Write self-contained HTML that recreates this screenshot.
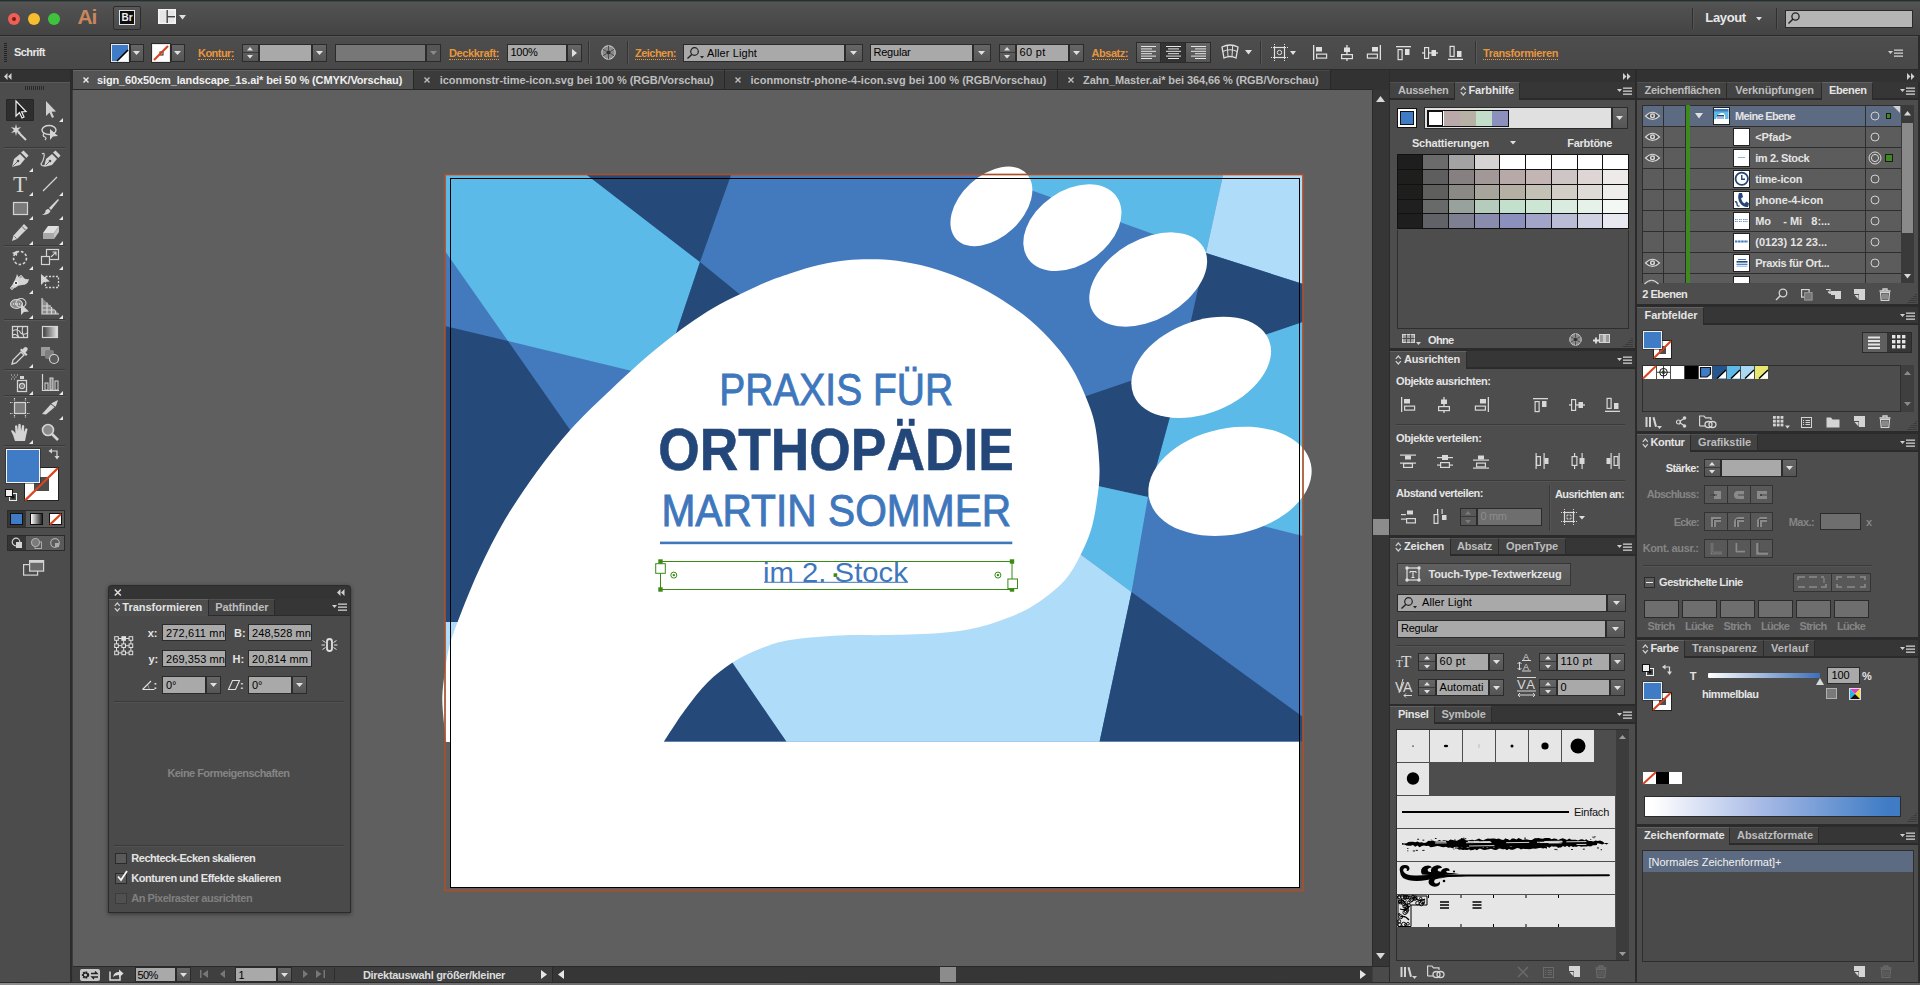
<!DOCTYPE html>
<html lang="de"><head><meta charset="utf-8"><title>Adobe Illustrator</title><style>
html,body{margin:0;padding:0;background:#5f5f5f;}
body{width:1920px;height:985px;overflow:hidden;position:relative;font-family:"Liberation Sans",sans-serif;font-weight:bold;font-size:11px;}
#app{position:absolute;left:0;top:0;width:1920px;height:985px;overflow:hidden;background:#5f5f5f;}
#app div,#app span,#app svg{position:absolute;display:block;box-sizing:border-box;}
#app span{white-space:pre;}
#app svg{overflow:visible;}
</style></head><body><div id="app">
<div style="left:73px;top:90px;width:1300px;height:876px;background:#5f5f5f;"></div>
<svg style="left:73px;top:90px;font-family:'Liberation Sans',sans-serif;" width="1300" height="876" viewBox="73 90 1300 876"><defs><clipPath id="bleed"><rect x="445" y="175" width="858" height="566.5"/></clipPath></defs><rect x="450" y="178" width="850" height="710" fill="#fff"/><g clip-path="url(#bleed)"><rect x="445" y="175" width="858" height="567" fill="#437abe"/><polygon points="445,175 587,175 700,262 661,378 508,341 445,251" fill="#5bbae7"/><polygon points="587,175 731,175 700,262" fill="#254a79"/><polygon points="700,262 780,327 661,378" fill="#254a79"/><polygon points="445,326 508,341 640,530 445,640" fill="#254a79"/><polygon points="989,175 1223,175 1206,253" fill="#5bbae7"/><polygon points="1223,175 1303,175 1303,284 1206,253" fill="#afdcf8"/><polygon points="1206,253 1303,284 1303,322 1181.5,363.5" fill="#254a79"/><polygon points="1303,322 1181.5,363.5 1169.6,418 1148,497 1303,536" fill="#5bbae7"/><polygon points="1181.5,363.5 1000,425.5 1000,464 1098,486 1148,497 1169.6,418" fill="#254a79"/><polygon points="1000,464 1098,486 1148,497 1131.5,592 1080,554 1000,495" fill="#5bbae7"/><polygon points="1000,495 1080,554 1131.5,592 1099.5,742 786.6,742 731.5,663 700,560" fill="#afdcf8"/><polygon points="732,662 786.6,742 640,742 640,662" fill="#254a79"/><polygon points="1131.5,592 1303,717 1303,742 1099.5,742" fill="#254a79"/><polygon points="445,622 475,622 475,742 445,742" fill="#afdcf8"/></g><path d="M664,741.5 C667.5,736.25 677.75,719.83 685,710 C692.25,700.17 699.58,690.42 707.5,682.5 C715.42,674.58 723.75,668.12 732.5,662.5 C741.25,656.88 750.42,652.55 760,648.8 C769.58,645.05 776.67,642.22 790,640 C803.33,637.78 823.33,636.33 840,635.5 C856.67,634.67 873.33,635.42 890,635 C906.67,634.58 925.42,634.25 940,633 C954.58,631.75 965,630.5 977.5,627.5 C990,624.5 1004.58,619.37 1015,615 C1025.42,610.63 1031.67,607.13 1040,601.3 C1048.33,595.47 1058.33,587.55 1065,580 C1071.67,572.45 1075.67,564.33 1080,556 C1084.33,547.67 1088.17,539.33 1091,530 C1093.83,520.67 1095.58,510.33 1097,500 C1098.42,489.67 1099.83,480.5 1099.5,468 C1099.17,455.5 1097.42,437.17 1095,425 C1092.58,412.83 1088.83,404.45 1085,395 C1081.17,385.55 1077,376.63 1072,368.3 C1067,359.97 1062,353.05 1055,345 C1048,336.95 1039.67,328.05 1030,320 C1020.33,311.95 1008.17,303.5 997,296.7 C985.83,289.9 974.17,284.07 963,279.2 C951.83,274.33 941,270.57 930,267.5 C919,264.43 906.67,262.18 897,260.8 C887.33,259.42 880.33,259.3 872,259.2 C863.67,259.1 855.67,259.27 847,260.2 C838.33,261.13 829.5,262.58 820,264.8 C810.5,267.02 800.5,269.93 790,273.5 C779.5,277.07 770.83,279.83 757,286.2 C743.17,292.57 723.67,301.35 707,311.7 C690.33,322.05 673.67,334.7 657,348.3 C640.33,361.9 621.5,379.63 607,393.3 C592.5,406.97 581.6,417.35 570,430.3 C558.4,443.25 548.23,456.12 537.4,471 C526.57,485.88 514.73,503.1 505,519.6 C495.27,536.1 486.9,552.93 479,570 C471.1,587.07 462.6,609 457.6,622 C452.6,635 451.17,639.33 449,648 C446.83,656.67 445.72,665.83 444.6,674 C443.48,682.17 442.47,689.43 442.3,697 C442.13,704.57 442.95,711.9 443.6,719.4 C444.25,726.9 445.77,738.23 446.2,742 L450,742 L450,760 L664,760 Z" fill="#fff"/><ellipse cx="991.4" cy="206.4" rx="48" ry="31" transform="rotate(-43 991.4 206.4)" fill="#fff"/><ellipse cx="1072.4" cy="227.7" rx="54" ry="37" transform="rotate(-35 1072.4 227.7)" fill="#fff"/><ellipse cx="1148.2" cy="279.5" rx="64" ry="40" transform="rotate(-30 1148.2 279.5)" fill="#fff"/><ellipse cx="1201.2" cy="367.3" rx="73" ry="46" transform="rotate(-22 1201.2 367.3)" fill="#fff"/><ellipse cx="1230" cy="481.3" rx="82.7" ry="53" transform="rotate(-12 1230 481.3)" fill="#fff"/><rect x="450.5" y="178.5" width="849" height="709" fill="none" stroke="#000" stroke-width="1"/><rect x="445" y="174.5" width="858" height="716" fill="none" stroke="#a8502c" stroke-width="1.7"/><text x="719.2" y="405.3" font-size="44.6" font-weight="normal" fill="#3f77bc" stroke="#3f77bc" stroke-width="0.9" textLength="234" lengthAdjust="spacingAndGlyphs">PRAXIS FÜR</text><text x="658.3" y="469.8" font-size="59" font-weight="bold" fill="#24477a" stroke="#24477a" stroke-width="0.6" textLength="355.5" lengthAdjust="spacingAndGlyphs">ORTHOPÄDIE</text><text x="661.4" y="525.6" font-size="44.2" font-weight="normal" fill="#3f77bc" stroke="#3f77bc" stroke-width="0.9" textLength="349.8" lengthAdjust="spacingAndGlyphs">MARTIN SOMMER</text><rect x="660" y="541.6" width="352.3" height="2.6" fill="#3f77bc"/><text x="763.1" y="582.2" font-size="27.2" font-weight="normal" fill="#3f77bc" textLength="144.7" lengthAdjust="spacingAndGlyphs">im 2. Stock</text><rect x="764" y="581.8" width="144" height="1" fill="#3f77bc"/><rect x="660.5" y="561.5" width="351.5" height="28" fill="none" stroke="#3a8a14" stroke-width="1"/><rect x="658.3" y="559.3" width="4.4" height="4.4" fill="#3a8a14"/><rect x="658.3" y="587.3" width="4.4" height="4.4" fill="#3a8a14"/><rect x="1009.8" y="559.3" width="4.4" height="4.4" fill="#3a8a14"/><rect x="1009.8" y="587.3" width="4.4" height="4.4" fill="#3a8a14"/><rect x="655.7" y="563.7" width="9.6" height="9.6" fill="#fff" stroke="#3a8a14"/><rect x="1007.9" y="579" width="9.6" height="9.6" fill="#fff" stroke="#3a8a14"/><circle cx="673.8" cy="575.1" r="3" fill="#fff" stroke="#3a8a14" stroke-width="1"/><circle cx="673.8" cy="575.1" r="1.2" fill="#3a8a14"/><circle cx="997.9" cy="575.1" r="3" fill="#fff" stroke="#3a8a14" stroke-width="1"/><circle cx="997.9" cy="575.1" r="1.2" fill="#3a8a14"/><rect x="833.6" y="573.3" width="3.6" height="3.6" fill="#3a8a14"/></svg>
<div style="left:0px;top:0px;width:1920px;height:36px;background:#434343;background:linear-gradient(#575757 0px,#505050 8px,#444444 34px);"></div>
<div style="left:0px;top:0px;width:1920px;height:1px;background:#23302f;"></div>
<div style="left:0px;top:1px;width:1920px;height:1px;background:#424646;"></div>
<div style="left:0px;top:35px;width:1920px;height:1px;background:#2a2a2a;"></div>
<svg style="left:7.2px;top:11.7px;" width="14" height="14"><circle cx="7" cy="7" r="6" fill="#ee5f57"/><circle cx="7" cy="7" r="2" fill="#7a1d14"/></svg>
<svg style="left:27px;top:11.7px;" width="14" height="14"><circle cx="7" cy="7" r="6" fill="#f6be2f"/></svg>
<svg style="left:47px;top:11.7px;" width="14" height="14"><circle cx="7" cy="7" r="6" fill="#3fc33e"/></svg>
<span style="left:77.5px;top:3.5px;height:26px;line-height:26px;font-size:21px;color:#c8875d;letter-spacing:-1.25px;">Ai</span>
<div style="left:113px;top:6px;width:28px;height:24px;background:#505050;border:1px solid #2c2c2c;border-radius:2px;background:linear-gradient(#585858,#4a4a4a);"></div>
<div style="left:119px;top:10px;width:16px;height:15px;background:#0e0e0e;border:1px solid #e6e6e6;"></div>
<span style="left:121.44px;top:10.5px;height:14px;line-height:14px;font-size:10px;color:#f0f0f0;">Br</span>
<svg style="left:158px;top:9px;" width="18" height="15"><rect x="0.75" y="0.75" width="16.5" height="13.5" fill="#e6e6e6" stroke="#f4f4f4" stroke-width="1.5"/><rect x="8.5" y="1" width="1.4" height="13" fill="#444"/><rect x="9" y="7" width="8" height="1.4" fill="#444"/></svg>
<svg style="left:178.5px;top:14.75px;" width="7" height="4.5"><polygon points="0,0 7,0 3.5,4.5" fill="#e0e0e0"/></svg>
<div style="left:1691.5px;top:8px;width:1px;height:21px;background:#2f2f2f;"></div>
<div style="left:1692.5px;top:8px;width:1px;height:21px;background:#555;"></div>
<span style="left:1705.3px;top:8.5px;height:18px;line-height:18px;font-size:13px;color:#e8e8e8;letter-spacing:-0.35px;">Layout</span>
<svg style="left:1755.5px;top:16.75px;" width="6" height="3.5"><polygon points="0,0 6,0 3,3.5" fill="#e0e0e0"/></svg>
<div style="left:1776px;top:8px;width:1px;height:21px;background:#2f2f2f;"></div>
<div style="left:1777px;top:8px;width:1px;height:21px;background:#555;"></div>
<div style="left:1784.5px;top:9.5px;width:128px;height:18px;background:#b4b4b4;border:1px solid #2a2a2a;"></div>
<svg style="left:1787px;top:11px;" width="14" height="14"><circle cx="8.5" cy="5.5" r="3.6" fill="none" stroke="#222" stroke-width="1.3"/><line x1="6" y1="8" x2="1.5" y2="12.5" stroke="#222" stroke-width="1.5"/></svg>
<div style="left:0px;top:36px;width:1920px;height:33px;background:#4a4a4a;background:linear-gradient(#4d4d4d,#484848);"></div>
<div style="left:0px;top:36px;width:1920px;height:1px;background:#565656;"></div>
<div style="left:0px;top:69px;width:1920px;height:1px;background:#2a2a2a;"></div>
<div style="left:4px;top:43px;width:3px;height:20px;background:transparent;background:repeating-linear-gradient(#222 0px,#222 1px,transparent 1px,transparent 2px);"></div>
<span style="left:14px;top:45px;height:14px;line-height:14px;font-size:11px;color:#e6e6e6;letter-spacing:-0.55px;">Schrift</span>
<div style="left:110.5px;top:43.5px;width:18px;height:18px;background:#3f7cc5;border:1px solid #e8e8e8;outline:1px solid #2b2b2b;"></div>
<svg style="left:111.5px;top:44.5px;" width="16" height="16"><polygon points="16,5 16,16 5,16" fill="#fff"/><line x1="5" y1="16" x2="16" y2="5" stroke="#000" stroke-width="1.6"/></svg>
<div style="left:129.5px;top:43.5px;width:14px;height:18px;background:#5c5c5c;border:1px solid #2b2b2b;background:linear-gradient(#666,#555);"></div>
<svg style="left:133px;top:51px;" width="7" height="4"><polygon points="0,0 7,0 3.5,4" fill="#e0e0e0"/></svg>
<div style="left:151.5px;top:43.5px;width:18px;height:18px;background:#fff;border:1px solid #e8e8e8;outline:1px solid #2b2b2b;"></div>
<svg style="left:152.5px;top:44.5px;" width="16" height="16"><rect x="7" y="7" width="3" height="3" fill="none" stroke="#222" stroke-width="1"/><line x1="1" y1="15" x2="15" y2="1" stroke="#d9431e" stroke-width="2.2"/></svg>
<div style="left:170.5px;top:43.5px;width:14px;height:18px;background:#5c5c5c;border:1px solid #2b2b2b;background:linear-gradient(#666,#555);"></div>
<svg style="left:174px;top:51px;" width="7" height="4"><polygon points="0,0 7,0 3.5,4" fill="#e0e0e0"/></svg>
<span style="left:198px;top:45.5px;height:14px;line-height:14px;font-size:11px;color:#e8963c;letter-spacing:-0.53px;">Kontur:</span>
<div style="left:198px;top:59px;width:36px;height:1px;background:transparent;border-top:1px dotted #e8963c;"></div>
<div style="left:241.5px;top:43.5px;width:17px;height:18px;background:#5c5c5c;border:1px solid #2b2b2b;background:linear-gradient(#666,#555);"></div>
<div style="left:242.5px;top:52px;width:15px;height:1px;background:#3a3a3a;"></div>
<svg style="left:247px;top:47.11px;" width="6" height="3.5"><polygon points="0,3.5 6,3.5 3,0" fill="#e0e0e0"/></svg>
<svg style="left:247px;top:55.39px;" width="6" height="3.5"><polygon points="0,0 6,0 3,3.5" fill="#e0e0e0"/></svg>
<div style="left:258.5px;top:43.5px;width:53px;height:18px;background:#a9a9a9;border:1px solid #2b2b2b;"></div>
<div style="left:311.5px;top:43.5px;width:15px;height:18px;background:#5c5c5c;border:1px solid #2b2b2b;background:linear-gradient(#666,#555);"></div>
<svg style="left:315.5px;top:51px;" width="7" height="4"><polygon points="0,0 7,0 3.5,4" fill="#e0e0e0"/></svg>
<div style="left:334.5px;top:43.5px;width:91px;height:18px;background:#777777;border:1px solid #2b2b2b;"></div>
<div style="left:425.5px;top:43.5px;width:15px;height:18px;background:#565656;border:1px solid #2b2b2b;"></div>
<svg style="left:429.5px;top:51px;" width="7" height="4"><polygon points="0,0 7,0 3.5,4" fill="#8a8a8a"/></svg>
<span style="left:449px;top:45.5px;height:14px;line-height:14px;font-size:11px;color:#e8963c;letter-spacing:-0.38px;">Deckkraft:</span>
<div style="left:449px;top:59px;width:50px;height:1px;background:transparent;border-top:1px dotted #e8963c;"></div>
<div style="left:506.5px;top:43.5px;width:60px;height:18px;background:#a9a9a9;border:1px solid #2b2b2b;"></div>
<span style="left:510.5px;top:45.2px;height:14px;line-height:14px;font-size:11px;color:#000;font-weight:normal;letter-spacing:-0.28px;">100%</span>
<div style="left:566.5px;top:43.5px;width:15px;height:18px;background:#5c5c5c;border:1px solid #2b2b2b;background:linear-gradient(#666,#555);"></div>
<svg style="left:572px;top:48.5px;" width="5" height="8"><polygon points="0,0 5,4 0,8" fill="#e0e0e0"/></svg>
<div style="left:588px;top:41px;width:1px;height:23px;background:#333;"></div>
<div style="left:589px;top:41px;width:1px;height:23px;background:#585858;"></div>
<svg style="left:600.5px;top:44.5px;" width="15" height="15"><circle cx="7.5" cy="7.5" r="6.8" fill="#8a8a8a" stroke="#d8d8d8" stroke-width="1"/><circle cx="7.5" cy="7.5" r="2" fill="#333"/><path d="M7.5,0.7V5.5M7.5,9.5V14.3M1.6,4.1L5.7,6.5M9.3,8.5L13.4,10.9M1.6,10.9L5.7,8.5M9.3,6.5L13.4,4.1" stroke="#444" stroke-width="0.9"/></svg>
<div style="left:626.5px;top:41px;width:1px;height:23px;background:#333;"></div>
<div style="left:627.5px;top:41px;width:1px;height:23px;background:#585858;"></div>
<span style="left:635px;top:45.5px;height:14px;line-height:14px;font-size:11px;color:#e8963c;letter-spacing:-0.53px;">Zeichen:</span>
<div style="left:635px;top:59px;width:41px;height:1px;background:transparent;border-top:1px dotted #e8963c;"></div>
<div style="left:682.5px;top:43.5px;width:162px;height:18px;background:#a9a9a9;border:1px solid #2b2b2b;"></div>
<svg style="left:685.5px;top:46px;" width="20" height="14"><circle cx="8.5" cy="5.5" r="3.8" fill="none" stroke="#222" stroke-width="1.2"/><line x1="6" y1="8.2" x2="1.5" y2="12.5" stroke="#222" stroke-width="1.4"/><polygon points="14,10 18,10 16,12.5" fill="#222"/></svg>
<span style="left:707px;top:45.5px;height:14px;line-height:14px;font-size:11px;color:#000;font-weight:normal;letter-spacing:0.1px;">Aller Light</span>
<div style="left:844.5px;top:43.5px;width:18px;height:18px;background:#5c5c5c;border:1px solid #2b2b2b;background:linear-gradient(#666,#555);"></div>
<svg style="left:850px;top:51px;" width="7" height="4"><polygon points="0,0 7,0 3.5,4" fill="#e0e0e0"/></svg>
<div style="left:869.5px;top:43.5px;width:103px;height:18px;background:#a9a9a9;border:1px solid #2b2b2b;"></div>
<span style="left:873.5px;top:45.2px;height:14px;line-height:14px;font-size:11px;color:#000;font-weight:normal;letter-spacing:-0.22px;">Regular</span>
<div style="left:972.5px;top:43.5px;width:18px;height:18px;background:#5c5c5c;border:1px solid #2b2b2b;background:linear-gradient(#666,#555);"></div>
<svg style="left:978px;top:51px;" width="7" height="4"><polygon points="0,0 7,0 3.5,4" fill="#e0e0e0"/></svg>
<div style="left:998.5px;top:43.5px;width:17px;height:18px;background:#5c5c5c;border:1px solid #2b2b2b;background:linear-gradient(#666,#555);"></div>
<div style="left:999.5px;top:52px;width:15px;height:1px;background:#3a3a3a;"></div>
<svg style="left:1004px;top:47.11px;" width="6" height="3.5"><polygon points="0,3.5 6,3.5 3,0" fill="#e0e0e0"/></svg>
<svg style="left:1004px;top:55.39px;" width="6" height="3.5"><polygon points="0,0 6,0 3,3.5" fill="#e0e0e0"/></svg>
<div style="left:1015.5px;top:43.5px;width:53px;height:18px;background:#a9a9a9;border:1px solid #2b2b2b;"></div>
<span style="left:1019.5px;top:45.2px;height:14px;line-height:14px;font-size:11px;color:#000;font-weight:normal;letter-spacing:0.31px;">60 pt</span>
<div style="left:1068.5px;top:43.5px;width:15px;height:18px;background:#5c5c5c;border:1px solid #2b2b2b;background:linear-gradient(#666,#555);"></div>
<svg style="left:1072.5px;top:51px;" width="7" height="4"><polygon points="0,0 7,0 3.5,4" fill="#e0e0e0"/></svg>
<span style="left:1091.5px;top:45.5px;height:14px;line-height:14px;font-size:11px;color:#e8963c;letter-spacing:-0.46px;">Absatz:</span>
<div style="left:1091.5px;top:59px;width:36.5px;height:1px;background:transparent;border-top:1px dotted #e8963c;"></div>
<div style="left:1135.5px;top:41.5px;width:75px;height:21px;background:#5a5a5a;border:1px solid #2b2b2b;background:linear-gradient(#646464,#545454);"></div>
<div style="left:1160.5px;top:42.5px;width:25px;height:19px;background:#333;"></div>
<div style="left:1160px;top:42.5px;width:1px;height:19px;background:#2b2b2b;"></div>
<div style="left:1185px;top:42.5px;width:1px;height:19px;background:#2b2b2b;"></div>
<svg style="left:1140.5px;top:45.5px;" width="15" height="14"><rect x="0" y="0" width="15" height="1" fill="#e6e6e6"/><rect x="0" y="2.4" width="11" height="1" fill="#e6e6e6"/><rect x="0" y="4.8" width="15" height="1" fill="#e6e6e6"/><rect x="0" y="7.2" width="11" height="1" fill="#e6e6e6"/><rect x="0" y="9.6" width="15" height="1" fill="#e6e6e6"/><rect x="0" y="12" width="11" height="1" fill="#e6e6e6"/></svg>
<svg style="left:1165.5px;top:45.5px;" width="15" height="14"><rect x="0" y="0" width="15" height="1" fill="#e6e6e6"/><rect x="2" y="2.4" width="11" height="1" fill="#e6e6e6"/><rect x="0" y="4.8" width="15" height="1" fill="#e6e6e6"/><rect x="2" y="7.2" width="11" height="1" fill="#e6e6e6"/><rect x="0" y="9.6" width="15" height="1" fill="#e6e6e6"/><rect x="2" y="12" width="11" height="1" fill="#e6e6e6"/></svg>
<svg style="left:1190.5px;top:45.5px;" width="15" height="14"><rect x="0" y="0" width="15" height="1" fill="#e6e6e6"/><rect x="4" y="2.4" width="11" height="1" fill="#e6e6e6"/><rect x="0" y="4.8" width="15" height="1" fill="#e6e6e6"/><rect x="4" y="7.2" width="11" height="1" fill="#e6e6e6"/><rect x="0" y="9.6" width="15" height="1" fill="#e6e6e6"/><rect x="4" y="12" width="11" height="1" fill="#e6e6e6"/></svg>
<svg style="left:1221px;top:44px;" width="18" height="16"><path d="M1,3 Q9,-1 17,3 L15,14 Q9,11 3,14 Z" fill="none" stroke="#e0e0e0" stroke-width="1.3"/><path d="M6.3,1.6 L7,12.5 M11.7,1.6 L11,12.5 M1.8,7.5 Q9,4 16.2,7.5" fill="none" stroke="#e0e0e0" stroke-width="1"/></svg>
<svg style="left:1245px;top:50.25px;" width="7" height="4.5"><polygon points="0,0 7,0 3.5,4.5" fill="#e0e0e0"/></svg>
<div style="left:1260px;top:41px;width:1px;height:23px;background:#333;"></div>
<div style="left:1261px;top:41px;width:1px;height:23px;background:#585858;"></div>
<svg style="left:1271px;top:44px;" width="18" height="17"><rect x="3.5" y="3.5" width="10" height="10" fill="none" stroke="#e0e0e0" stroke-width="1.2"/><path d="M0,3.5H3M14,3.5H17M0,13.5H3M14,13.5H17M3.5,0V3M13.5,0V3M3.5,14V17M13.5,14V17" stroke="#e0e0e0" stroke-width="1" stroke-dasharray="1 1"/><circle cx="8.5" cy="8.5" r="2.2" fill="none" stroke="#e0e0e0" stroke-width="1"/></svg>
<svg style="left:1289.5px;top:51px;" width="6" height="4"><polygon points="0,0 6,0 3,4" fill="#e0e0e0"/></svg>
<svg style="left:1312.2px;top:44.5px;" width="16" height="16"><rect x="1" y="0" width="1.3" height="15" fill="#e0e0e0"/><rect x="4" y="2" width="6" height="4.5" fill="#e0e0e0"/><g fill="none" stroke="#e0e0e0" stroke-width="1.2"><rect x="4.6" y="9.1" width="10" height="4"/></g></svg>
<svg style="left:1338.5px;top:44.5px;" width="16" height="16"><rect x="7.3" y="0" width="1.3" height="16" fill="#e0e0e0"/><rect x="5" y="2.5" width="6" height="4.5" fill="#e0e0e0"/><g fill="none" stroke="#e0e0e0" stroke-width="1.2"><rect x="2.6" y="9.6" width="10.8" height="4" fill="#4d4d4d"/></g></svg>
<svg style="left:1365.5px;top:44.5px;" width="16" height="16"><rect x="13.7" y="0" width="1.3" height="15" fill="#e0e0e0"/><rect x="6" y="2" width="6" height="4.5" fill="#e0e0e0"/><g fill="none" stroke="#e0e0e0" stroke-width="1.2"><rect x="1.4" y="9.1" width="10" height="4"/></g></svg>
<svg style="left:1396px;top:44.5px;" width="16" height="16"><rect x="0" y="1" width="15" height="1.3" fill="#e0e0e0"/><rect x="9" y="4" width="4.5" height="6" fill="#e0e0e0"/><g fill="none" stroke="#e0e0e0" stroke-width="1.2"><rect x="2.1" y="4.6" width="4" height="10"/></g></svg>
<svg style="left:1422px;top:44.5px;" width="16" height="16"><rect x="0" y="7.3" width="16" height="1.3" fill="#e0e0e0"/><rect x="9.5" y="5" width="4.5" height="6" fill="#e0e0e0"/><g fill="none" stroke="#e0e0e0" stroke-width="1.2"><rect x="2.6" y="2.6" width="4" height="10.8" fill="#4d4d4d"/></g></svg>
<svg style="left:1448px;top:44.5px;" width="16" height="16"><rect x="0" y="13.7" width="15" height="1.3" fill="#e0e0e0"/><rect x="9" y="6" width="4.5" height="6" fill="#e0e0e0"/><g fill="none" stroke="#e0e0e0" stroke-width="1.2"><rect x="2.1" y="1.4" width="4" height="10"/></g></svg>
<div style="left:1474.5px;top:41px;width:1px;height:23px;background:#333;"></div>
<div style="left:1475.5px;top:41px;width:1px;height:23px;background:#585858;"></div>
<span style="left:1483px;top:45.5px;height:14px;line-height:14px;font-size:11px;color:#e8963c;letter-spacing:-0.36px;">Transformieren</span>
<div style="left:1483px;top:59px;width:75px;height:1px;background:transparent;border-top:1px dotted #e8963c;"></div>
<svg style="left:1888px;top:48.5px;" width="15" height="9"><polygon points="0,2 5,2 2.5,5" fill="#d0d0d0"/><rect x="6" y="0.5" width="9" height="1.3" fill="#d0d0d0"/><rect x="6" y="3.5" width="9" height="1.3" fill="#d0d0d0"/><rect x="6" y="6.5" width="9" height="1.3" fill="#d0d0d0"/></svg>
<div style="left:73px;top:70px;width:1300px;height:20px;background:#323232;"></div>
<div style="left:73px;top:89px;width:1300px;height:1px;background:#282828;"></div>
<div style="left:73px;top:70px;width:341px;height:19px;background:#535353;border-top:1px solid #656565;"></div>
<div style="left:413px;top:70px;width:1px;height:19px;background:#282828;"></div>
<svg style="left:83px;top:76.5px;" width="6" height="6"><path d="M0.5,0.5L5.5,5.5M5.5,0.5L0.5,5.5" stroke="#f0f0f0" stroke-width="1.4"/></svg>
<span style="left:97px;top:72.5px;height:14px;line-height:14px;font-size:11px;color:#f0f0f0;letter-spacing:-0.13px;">sign_60x50cm_landscape_1s.ai* bei 50 % (CMYK/Vorschau)</span>
<div style="left:414px;top:70px;width:311px;height:19px;background:#3b3b3b;border-top:1px solid #484848;"></div>
<div style="left:724px;top:70px;width:1px;height:19px;background:#282828;"></div>
<svg style="left:424px;top:76.5px;" width="6" height="6"><path d="M0.5,0.5L5.5,5.5M5.5,0.5L0.5,5.5" stroke="#bebebe" stroke-width="1.4"/></svg>
<span style="left:439.7px;top:72.5px;height:14px;line-height:14px;font-size:11px;color:#bebebe;letter-spacing:-0.02px;">iconmonstr-time-icon.svg bei 100 % (RGB/Vorschau)</span>
<div style="left:725px;top:70px;width:333px;height:19px;background:#3b3b3b;border-top:1px solid #484848;"></div>
<div style="left:1057px;top:70px;width:1px;height:19px;background:#282828;"></div>
<svg style="left:735px;top:76.5px;" width="6" height="6"><path d="M0.5,0.5L5.5,5.5M5.5,0.5L0.5,5.5" stroke="#bebebe" stroke-width="1.4"/></svg>
<span style="left:750.5px;top:72.5px;height:14px;line-height:14px;font-size:11px;color:#bebebe;letter-spacing:0.02px;">iconmonstr-phone-4-icon.svg bei 100 % (RGB/Vorschau)</span>
<div style="left:1058px;top:70px;width:273px;height:19px;background:#3b3b3b;border-top:1px solid #484848;"></div>
<div style="left:1330px;top:70px;width:1px;height:19px;background:#282828;"></div>
<svg style="left:1068px;top:76.5px;" width="6" height="6"><path d="M0.5,0.5L5.5,5.5M5.5,0.5L0.5,5.5" stroke="#bebebe" stroke-width="1.4"/></svg>
<span style="left:1083px;top:72.5px;height:14px;line-height:14px;font-size:11px;color:#bebebe;letter-spacing:-0.09px;">Zahn_Master.ai* bei 364,66 % (RGB/Vorschau)</span>
<div style="left:1372px;top:90px;width:17px;height:876px;background:#363636;border-left:1px solid #2a2a2a;"></div>
<div style="left:1372px;top:70px;width:17px;height:20px;background:#323232;"></div>
<svg style="left:1376px;top:96px;" width="9" height="6"><polygon points="0,6 9,6 4.5,0" fill="#d8d8d8"/></svg>
<svg style="left:1376px;top:953px;" width="9" height="6"><polygon points="0,0 9,0 4.5,6" fill="#d8d8d8"/></svg>
<div style="left:1373px;top:519px;width:16px;height:15.5px;background:#8c8c8c;"></div>
<div style="left:73px;top:966px;width:1316px;height:16px;background:#3f3f3f;border-top:1px solid #2a2a2a;"></div>
<div style="left:1918px;top:36px;width:2px;height:949px;background:#2b2b2b;"></div>
<svg style="left:79.5px;top:968.5px;" width="20" height="12"><rect x="0" y="0" width="20" height="12" rx="2" fill="#c6c6c6"/><circle cx="5.500" cy="6" r="2.600" fill="none" stroke="#222" stroke-width="2.200" stroke-dasharray="1.500 0.900"/><circle cx="5.500" cy="6" r="2.200" fill="none" stroke="#222" stroke-width="1.200"/><path d="M11,4.500h6l-2,-2M18,8h-6l2,2" stroke="#222" stroke-width="1.300" fill="none"/></svg>
<svg style="left:109px;top:967.5px;" width="15" height="13"><path d="M1,3.5V12H11V8" fill="none" stroke="#ddd" stroke-width="1.5"/><path d="M4,9Q5,4 10,4V1.5L14.5,5.5L10,9.5V7Q6,7 4,9Z" fill="#ddd"/></svg>
<div style="left:134.5px;top:966.5px;width:41px;height:15px;background:#a9a9a9;border:1px solid #2b2b2b;"></div>
<span style="left:137.5px;top:967.7px;height:14px;line-height:14px;font-size:11px;color:#000;font-weight:normal;letter-spacing:-0.67px;">50%</span>
<div style="left:175.5px;top:966.5px;width:15px;height:15px;background:#5c5c5c;border:1px solid #2b2b2b;background:linear-gradient(#666,#555);"></div>
<svg style="left:179.5px;top:972.5px;" width="7" height="4"><polygon points="0,0 7,0 3.5,4" fill="#e0e0e0"/></svg>
<svg style="left:200px;top:970px;" width="9" height="8"><rect x="0" y="0" width="1.5" height="8" fill="#777"/><polygon points="8,0 8,8 2.5,4" fill="#777"/></svg>
<svg style="left:219.5px;top:970px;" width="5" height="8"><polygon points="5,0 0,4 5,8" fill="#777"/></svg>
<div style="left:234.5px;top:966.5px;width:42px;height:15px;background:#a9a9a9;border:1px solid #2b2b2b;"></div>
<span style="left:238.5px;top:967.7px;height:14px;line-height:14px;font-size:11px;color:#000;font-weight:normal;">1</span>
<div style="left:276.5px;top:966.5px;width:15px;height:15px;background:#5c5c5c;border:1px solid #2b2b2b;background:linear-gradient(#666,#555);"></div>
<svg style="left:280.5px;top:972.5px;" width="7" height="4"><polygon points="0,0 7,0 3.5,4" fill="#e0e0e0"/></svg>
<svg style="left:302.5px;top:970px;" width="5" height="8"><polygon points="0,0 5,4 0,8" fill="#777"/></svg>
<svg style="left:316px;top:970px;" width="9" height="8"><rect x="7.5" y="0" width="1.5" height="8" fill="#777"/><polygon points="0,0 0,8 5.5,4" fill="#777"/></svg>
<div style="left:334px;top:968px;width:1px;height:13px;background:#2e2e2e;"></div>
<span style="left:363px;top:967.5px;height:14px;line-height:14px;font-size:11px;color:#dcdcdc;letter-spacing:-0.32px;">Direktauswahl größer/kleiner</span>
<svg style="left:541px;top:969.5px;" width="6" height="9"><polygon points="0,0 6,4.5 0,9" fill="#e6e6e6"/></svg>
<div style="left:552px;top:967px;width:1px;height:15px;background:#2a2a2a;"></div>
<div style="left:553px;top:967px;width:819px;height:15px;background:#363636;"></div>
<svg style="left:558px;top:969.5px;" width="6" height="9"><polygon points="6,0 0,4.5 6,9" fill="#e6e6e6"/></svg>
<svg style="left:1360px;top:969.5px;" width="6" height="9"><polygon points="0,0 6,4.5 0,9" fill="#e6e6e6"/></svg>
<div style="left:940px;top:967px;width:15.5px;height:15px;background:#8c8c8c;"></div>
<div style="left:0px;top:70px;width:70px;height:915px;background:#4c4c4c;"></div>
<div style="left:70px;top:70px;width:3px;height:915px;background:#2b2b2b;"></div>
<div style="left:72px;top:90px;width:1px;height:892px;background:#3c3c3c;"></div>
<div style="left:0px;top:70px;width:70px;height:12px;background:#323232;"></div>
<div style="left:0px;top:82px;width:70px;height:1px;background:#5a5a5a;"></div>
<svg style="left:4px;top:72.5px;" width="8" height="7"><polygon points="3.5,0 3.5,7 0,3.5" fill="#d0d0d0"/><polygon points="7.5,0 7.5,7 4,3.5" fill="#d0d0d0"/></svg>
<div style="left:25px;top:86px;width:20px;height:4px;background:transparent;background:repeating-linear-gradient(90deg,#2a2a2a 0px,#2a2a2a 1px,transparent 1px,transparent 2px);"></div>
<div style="left:4px;top:146.5px;width:61px;height:1px;background:#3a3a3a;"></div>
<div style="left:4px;top:147.5px;width:61px;height:1px;background:#585858;"></div>
<div style="left:4px;top:244.5px;width:61px;height:1px;background:#3a3a3a;"></div>
<div style="left:4px;top:245.5px;width:61px;height:1px;background:#585858;"></div>
<div style="left:4px;top:319px;width:61px;height:1px;background:#3a3a3a;"></div>
<div style="left:4px;top:320px;width:61px;height:1px;background:#585858;"></div>
<div style="left:4px;top:369px;width:61px;height:1px;background:#3a3a3a;"></div>
<div style="left:4px;top:370px;width:61px;height:1px;background:#585858;"></div>
<div style="left:4px;top:394.5px;width:61px;height:1px;background:#3a3a3a;"></div>
<div style="left:4px;top:395.5px;width:61px;height:1px;background:#585858;"></div>
<div style="left:4px;top:444.5px;width:61px;height:1px;background:#3a3a3a;"></div>
<div style="left:4px;top:445.5px;width:61px;height:1px;background:#585858;"></div>
<div style="left:6px;top:99px;width:28px;height:22px;background:#2e2e2e;border:1px solid #262626;border-radius:1px;"></div>
<svg style="left:9px;top:98.5px;" width="22" height="22"><path d="M7,2 L7,17 L10.5,13.5 L13,19 L15,18 L12.6,12.8 L17,12.5 Z" fill="#1a1a1a" stroke="#f0f0f0" stroke-width="1.2"/></svg>
<svg style="left:39px;top:98.5px;" width="22" height="22"><path d="M7,2 L7,17 L10.5,13.5 L13,19 L15,18 L12.6,12.8 L17,12.5 Z" fill="#cfcfcf"/></svg>
<svg style="left:59px;top:117.5px;" width="4" height="4"><polygon points="4,0 4,4 0,4" fill="#e8e8e8"/></svg>
<svg style="left:9px;top:123px;" width="22" height="22"><path d="M7,1 L8,5 L12,4 L9,7 L12,10 L8,9 L7,13 L6,9 L2,10 L5,7 L2,4 L6,5 Z" fill="#d4d4d4"/><line x1="9" y1="9" x2="17" y2="17" stroke="#d4d4d4" stroke-width="2"/></svg>
<svg style="left:39px;top:123px;" width="22" height="22"><ellipse cx="10" cy="7" rx="7" ry="4.5" fill="none" stroke="#d4d4d4" stroke-width="1.4"/><path d="M5,10 Q3,13 6,14 Q8,15 6,17" fill="none" stroke="#d4d4d4" stroke-width="1.2"/><path d="M11,6 L11,17 L14,13.5 L19,13 Z" fill="#d4d4d4"/></svg>
<svg style="left:9px;top:149px;" width="22" height="22"><path d="M3,18 L5,10 L11,5 L16,10 L11,16 Z" fill="#d4d4d4"/><circle cx="9" cy="12" r="1.3" fill="#4c4c4c"/><line x1="3.5" y1="17.5" x2="8.3" y2="12.7" stroke="#4c4c4c" stroke-width="0.8"/><path d="M12,3.5 L14.5,1.5 L19.5,6.5 L17.5,9 Z" fill="#d4d4d4"/></svg>
<svg style="left:29px;top:168px;" width="4" height="4"><polygon points="4,0 4,4 0,4" fill="#e8e8e8"/></svg>
<svg style="left:41px;top:149px;" width="22" height="22"><path d="M3,18 L5,10 L11,5 L16,10 L11,16 Z" fill="#d4d4d4"/><circle cx="9" cy="12" r="1.3" fill="#4c4c4c"/><line x1="3.5" y1="17.5" x2="8.3" y2="12.7" stroke="#4c4c4c" stroke-width="0.8"/><path d="M12,3.5 L14.5,1.5 L19.5,6.5 L17.5,9 Z" fill="#d4d4d4"/><path d="M-1,5 Q2,3 1,8 Q0,13 -2,15 Q-1,18 3,16" fill="none" stroke="#d4d4d4" stroke-width="1.2" transform="translate(2,0)"/></svg>
<svg style="left:10px;top:173px;" width="20" height="22"><text x="10" y="19" font-size="23" text-anchor="middle" fill="#d4d4d4" style="font-family:'Liberation Serif',serif;font-weight:normal">T</text></svg>
<svg style="left:29px;top:192px;" width="4" height="4"><polygon points="4,0 4,4 0,4" fill="#e8e8e8"/></svg>
<svg style="left:39px;top:173px;" width="22" height="22"><line x1="4" y1="18" x2="18" y2="4" stroke="#d4d4d4" stroke-width="1.3"/></svg>
<svg style="left:59px;top:192px;" width="4" height="4"><polygon points="4,0 4,4 0,4" fill="#e8e8e8"/></svg>
<svg style="left:9px;top:197px;" width="22" height="22"><rect x="4.5" y="5.5" width="14" height="12" fill="#7a7a7a" stroke="#d4d4d4" stroke-width="1.2"/></svg>
<svg style="left:29px;top:216px;" width="4" height="4"><polygon points="4,0 4,4 0,4" fill="#e8e8e8"/></svg>
<svg style="left:39px;top:197px;" width="22" height="22"><path d="M19,2 L20,3 L12,13 L10,11 Z" fill="#d4d4d4"/><path d="M9.5,12 L11.5,14 Q10,18 3,18 Q7,16 6.5,13.5 Q8,11.5 9.5,12 Z" fill="#d4d4d4"/></svg>
<svg style="left:59px;top:216px;" width="4" height="4"><polygon points="4,0 4,4 0,4" fill="#e8e8e8"/></svg>
<svg style="left:9px;top:222px;" width="22" height="22"><path d="M15,2 L19,6 L8,17 L3,19 L4.5,13.5 Z" fill="#d4d4d4"/><path d="M5.5,14.5 L7.5,16.5" stroke="#4c4c4c" stroke-width="0.8"/><path d="M13,4.5L16.5,8" stroke="#4c4c4c" stroke-width="0.9"/></svg>
<svg style="left:29px;top:241px;" width="4" height="4"><polygon points="4,0 4,4 0,4" fill="#e8e8e8"/></svg>
<svg style="left:39px;top:222px;" width="22" height="22"><path d="M9,4 L20,4 L15,11 L4,11 Z" fill="#e0e0e0"/><path d="M4,11 L15,11 L15,17 L4,17 Z" fill="#a8a8a8"/><path d="M15,11 L20,4 L20,10 L15,17 Z" fill="#c4c4c4"/></svg>
<svg style="left:59px;top:241px;" width="4" height="4"><polygon points="4,0 4,4 0,4" fill="#e8e8e8"/></svg>
<svg style="left:9px;top:247px;" width="22" height="22"><circle cx="11" cy="11" r="6.5" fill="none" stroke="#d4d4d4" stroke-width="1.6" stroke-dasharray="2.6 1.8"/><path d="M3,6 L8.5,3.5 L8,9 Z" fill="#d4d4d4"/></svg>
<svg style="left:29px;top:266px;" width="4" height="4"><polygon points="4,0 4,4 0,4" fill="#e8e8e8"/></svg>
<svg style="left:39px;top:247px;" width="22" height="22"><rect x="7.5" y="2.500" width="12" height="10" fill="none" stroke="#d4d4d4" stroke-width="1.2"/><rect x="2.5" y="9.500" width="8" height="8" fill="#4c4c4c" stroke="#d4d4d4" stroke-width="1.2"/><path d="M12,10 L17,5 M13.500,5 H17 V8.500" stroke="#d4d4d4" stroke-width="1.1" fill="none"/></svg>
<svg style="left:59px;top:266px;" width="4" height="4"><polygon points="4,0 4,4 0,4" fill="#e8e8e8"/></svg>
<svg style="left:9px;top:271px;" width="22" height="22"><path d="M2,16 Q7,8 8,3 Q11,10 14,6 Q16,9 20,8 Q19,14 13,14 Q9,14 6,17 Z" fill="#d4d4d4"/><circle cx="7" cy="12" r="1.800" fill="#4c4c4c" stroke="#fff" stroke-width="1"/><circle cx="3" cy="17" r="1.300" fill="#4c4c4c" stroke="#fff" stroke-width="0.900"/><circle cx="12" cy="6" r="1.300" fill="#4c4c4c" stroke="#fff" stroke-width="0.900"/></svg>
<svg style="left:29px;top:290px;" width="4" height="4"><polygon points="4,0 4,4 0,4" fill="#e8e8e8"/></svg>
<svg style="left:39px;top:271px;" width="22" height="22"><rect x="6.500" y="5.500" width="13" height="11" fill="none" stroke="#d4d4d4" stroke-width="1.300" stroke-dasharray="2 1.500"/><path d="M2,3 L2,14 L5,11 L11,10.500 Z" fill="#d4d4d4"/></svg>
<svg style="left:9px;top:295.7px;" width="22" height="22"><ellipse cx="7.500" cy="8" rx="6" ry="4.500" fill="#8a8a8a" stroke="#d4d4d4" stroke-width="1.100"/><ellipse cx="12" cy="7" rx="5" ry="4.500" fill="none" stroke="#d4d4d4" stroke-width="1.100"/><path d="M4,8 H11" stroke="#fff" stroke-width="1.200" stroke-dasharray="1 1"/><path d="M12,8 L12,19 L15,16 L20,15.500 Z" fill="#d4d4d4"/></svg>
<svg style="left:29px;top:314.7px;" width="4" height="4"><polygon points="4,0 4,4 0,4" fill="#e8e8e8"/></svg>
<svg style="left:39px;top:295.7px;" width="22" height="22"><path d="M3,2 L3,18 L20,18 Z" fill="#8a8a8a"/><path d="M3,2 L3,18 L20,18 M8,6.500 V18 M12.500,11 V18 M3,10 H12 M3,14 H16 M16.500,14.500 V18" fill="none" stroke="#d4d4d4" stroke-width="1.200"/></svg>
<svg style="left:59px;top:314.7px;" width="4" height="4"><polygon points="4,0 4,4 0,4" fill="#e8e8e8"/></svg>
<svg style="left:9px;top:321px;" width="22" height="22"><rect x="3.500" y="5.500" width="15" height="11" fill="none" stroke="#d4d4d4" stroke-width="1.300"/><path d="M3.500,10 Q9,7 11,11 Q13,15 18.500,12 M9,5.500 Q7,11 10,16.500 M14,5.500 Q12,9 15,16.500 M3.500,14 Q7,12 9,16" fill="none" stroke="#d4d4d4" stroke-width="1.100"/></svg>
<svg style="left:39px;top:321px;" width="22" height="22"><defs><linearGradient id="tg1"><stop offset="0" stop-color="#3a3a3a"/><stop offset="1" stop-color="#e6e6e6"/></linearGradient></defs><rect x="3.500" y="5.500" width="15" height="11" fill="url(#tg1)" stroke="#d4d4d4" stroke-width="1.200"/></svg>
<svg style="left:9px;top:345px;" width="22" height="22"><path d="M3,19 L4,15 L12,7 L15,10 L7,18 Z" fill="none" stroke="#d4d4d4" stroke-width="1.300"/><path d="M11,5 L17,11 L18.500,9.500 L16.500,7.500 Q20,4 18,2.500 Q16,1 13.500,4.500 L12.500,3.500 Z" fill="#d4d4d4"/></svg>
<svg style="left:29px;top:364px;" width="4" height="4"><polygon points="4,0 4,4 0,4" fill="#e8e8e8"/></svg>
<svg style="left:39px;top:345px;" width="22" height="22"><rect x="2" y="2" width="9" height="9" fill="#9a9a9a"/><rect x="6" y="5" width="9" height="9" fill="#7e7e7e" rx="2"/><circle cx="15" cy="14" r="4.500" fill="#5a5a5a" stroke="#d4d4d4" stroke-width="1.200"/></svg>
<svg style="left:9px;top:372px;" width="22" height="22"><rect x="8.500" y="8.500" width="9" height="11" fill="none" stroke="#d4d4d4" stroke-width="1.300"/><rect x="11" y="4" width="4" height="3" fill="#d4d4d4"/><circle cx="13" cy="14" r="2.500" fill="none" stroke="#d4d4d4" stroke-width="1.300"/><circle cx="13" cy="14" r="0.800" fill="#d4d4d4"/><path d="M2,3h1M5,3h1M8,3h1M3.500,5h1M6.500,5h1M2,7h1M5,7h1" stroke="#d4d4d4" stroke-width="1"/></svg>
<svg style="left:29px;top:391px;" width="4" height="4"><polygon points="4,0 4,4 0,4" fill="#e8e8e8"/></svg>
<svg style="left:39px;top:372px;" width="22" height="22"><path d="M3.500,2 V18.500 H20" fill="none" stroke="#d4d4d4" stroke-width="1.200"/><rect x="6" y="11" width="3" height="7" fill="none" stroke="#d4d4d4"/><rect x="11" y="6" width="3" height="12" fill="#8a8a8a" stroke="#d4d4d4"/><rect x="16" y="9" width="3" height="9" fill="none" stroke="#d4d4d4"/></svg>
<svg style="left:59px;top:391px;" width="4" height="4"><polygon points="4,0 4,4 0,4" fill="#e8e8e8"/></svg>
<svg style="left:9px;top:397px;" width="22" height="22"><rect x="5.500" y="5.500" width="11" height="11" fill="#7a7a7a" stroke="#d4d4d4" stroke-width="1.200"/><path d="M1,5.500H4M18,5.500H21M1,16.500H4M18,16.500H21M5.500,1V4M16.500,1V4M5.500,18V21M16.500,18V21" stroke="#d4d4d4" stroke-width="1.200" stroke-dasharray="1.500 1"/></svg>
<svg style="left:39px;top:397px;" width="22" height="22"><path d="M3,17 L13,6 L19,3 L17,9 L7,17.500 Z" fill="#d4d4d4"/><path d="M12,7L16,10" stroke="#4c4c4c" stroke-width="1"/></svg>
<svg style="left:59px;top:416px;" width="4" height="4"><polygon points="4,0 4,4 0,4" fill="#e8e8e8"/></svg>
<svg style="left:9px;top:420.6px;" width="22" height="22"><path d="M6,20 L4,14 L2,10 Q3,8.500 5,10.500 L6.500,12.500 L6,5 Q7.300,3.500 8.300,5 L9,10 L9.300,3.500 Q10.700,2 11.700,3.500 L12,10 L13,4.500 Q14.500,3.500 15.200,5 L15,11 L16.500,7.500 Q18,6.800 18.500,8.500 L17,15 L16,20 Z" fill="#d4d4d4"/></svg>
<svg style="left:29px;top:439.6px;" width="4" height="4"><polygon points="4,0 4,4 0,4" fill="#e8e8e8"/></svg>
<svg style="left:39px;top:420.6px;" width="22" height="22"><circle cx="9" cy="9" r="5.500" fill="#8a8a8a" stroke="#d4d4d4" stroke-width="1.600"/><line x1="13" y1="13" x2="19" y2="19" stroke="#d4d4d4" stroke-width="2.600"/></svg>
<div style="left:24px;top:466.8px;width:35px;height:34.5px;background:#fff;border:1px solid #222;"></div>
<div style="left:33.5px;top:477.3px;width:15.2px;height:14.2px;background:#4c4c4c;"></div>
<svg style="left:24px;top:466.8px;" width="35" height="34.5"><line x1="1" y1="33.500" x2="34" y2="1" stroke="#d9431e" stroke-width="2.400"/></svg>
<div style="left:5.7px;top:448.9px;width:34.5px;height:34.1px;background:#3f7cc5;border:1.200px solid #f4f4f4;box-shadow:0 0 0 0.500px #222;"></div>
<svg style="left:47px;top:448px;" width="15" height="14"><path d="M4,3 H10 V9" fill="none" stroke="#d4d4d4" stroke-width="1.200"/><polygon points="1.500,3 5,0.500 5,5.500" fill="#d4d4d4"/><polygon points="10,11.500 7.500,8 12.500,8" fill="#d4d4d4"/></svg>
<svg style="left:5px;top:489px;" width="13" height="13"><rect x="4.500" y="4.500" width="7" height="7" fill="#4c4c4c" stroke="#eee" stroke-width="1"/><rect x="6.500" y="6.500" width="3" height="3" fill="#111"/><rect x="0.500" y="0.500" width="7" height="7" fill="#eee" stroke="#111" stroke-width="1"/></svg>
<div style="left:6.5px;top:510px;width:58px;height:17.5px;background:#5a5a5a;border:1px solid #2b2b2b;"></div>
<div style="left:7.5px;top:511px;width:18.5px;height:15.5px;background:#353535;"></div>
<div style="left:10px;top:512.5px;width:13px;height:12.5px;background:#3f7cc5;border:1px solid #111;"></div>
<div style="left:29.5px;top:512.5px;width:13px;height:12.5px;background:#fff;border:1px solid #111;background:linear-gradient(90deg,#fff,#222);"></div>
<div style="left:48.5px;top:512.5px;width:13px;height:12.5px;background:#fff;border:1px solid #111;"></div>
<svg style="left:48.5px;top:512.5px;" width="13" height="12.5"><line x1="1" y1="11.500" x2="12" y2="1" stroke="#d9431e" stroke-width="2.200"/></svg>
<div style="left:6.5px;top:534.6px;width:58px;height:16px;background:#5a5a5a;border:1px solid #2b2b2b;"></div>
<div style="left:7.5px;top:535.6px;width:18.5px;height:14px;background:#353535;"></div>
<svg style="left:11px;top:537px;" width="12" height="12"><circle cx="5" cy="5" r="3.800" fill="none" stroke="#d4d4d4" stroke-width="1.200"/><rect x="5" y="5" width="6" height="6" fill="#d4d4d4"/></svg>
<svg style="left:29.5px;top:537px;" width="13" height="12"><rect x="5" y="5" width="6.500" height="6.500" fill="none" stroke="#aaa" stroke-width="1"/><circle cx="5.500" cy="5.500" r="4" fill="#7a7a7a" stroke="#aaa" stroke-width="1.200"/></svg>
<svg style="left:49px;top:537px;" width="12" height="12"><circle cx="6" cy="6" r="4.300" fill="none" stroke="#aaa" stroke-width="1.200"/><path d="M6,6 H10 V10 H6 Z" fill="#aaa"/></svg>
<svg style="left:23px;top:560px;" width="22" height="16"><rect x="0.600" y="4.600" width="14" height="10.500" fill="#4c4c4c" stroke="#d4d4d4" stroke-width="1.200"/><rect x="6.600" y="0.600" width="14" height="10.500" fill="#6a6a6a" stroke="#d4d4d4" stroke-width="1.200"/><rect x="6.600" y="0.600" width="14" height="2.200" fill="#d4d4d4"/></svg>
<div style="left:1389px;top:70px;width:531px;height:915px;background:#2b2b2b;"></div>
<div style="left:1390px;top:70px;width:245px;height:12px;background:#323232;"></div>
<div style="left:1637px;top:70px;width:283px;height:12px;background:#323232;"></div>
<svg style="left:1623px;top:72.5px;" width="8" height="7"><polygon points="0,0 3.500,3.500 0,7" fill="#d0d0d0"/><polygon points="4,0 7.500,3.500 4,7" fill="#d0d0d0"/></svg>
<svg style="left:1906.5px;top:72.5px;" width="8" height="7"><polygon points="0,0 3.500,3.500 0,7" fill="#d0d0d0"/><polygon points="4,0 7.500,3.500 4,7" fill="#d0d0d0"/></svg>
<div style="left:1390px;top:82px;width:245px;height:17px;background:#363636;border-bottom:1px solid #2b2b2b;"></div>
<div style="left:1390px;top:82px;width:65px;height:16px;background:#434343;border-top:1px solid #505050;border-right:1px solid #2b2b2b;"></div>
<span style="left:1398px;top:83px;height:14px;line-height:14px;font-size:11px;color:#bdbdbd;letter-spacing:-0.26px;">Aussehen</span>
<div style="left:1455px;top:82px;width:65px;height:17.5px;background:#4d4d4d;border-top:1px solid #626262;border-right:1px solid #2b2b2b;"></div>
<svg style="left:1460px;top:85.5px;" width="7" height="10"><path d="M0.800,3.800 L3.300,1 L5.800,3.800 M0.800,6.200 L3.300,9 L5.800,6.200" fill="none" stroke="#d0d0d0" stroke-width="1.200"/></svg>
<span style="left:1468.5px;top:83px;height:14px;line-height:14px;font-size:11px;color:#e4e4e4;letter-spacing:-0.11px;">Farbhilfe</span>
<svg style="left:1616.5px;top:86.5px;" width="15" height="9"><polygon points="0,2 5,2 2.5,5" fill="#d0d0d0"/><rect x="6" y="0.5" width="9" height="1.3" fill="#d0d0d0"/><rect x="6" y="3.5" width="9" height="1.3" fill="#d0d0d0"/><rect x="6" y="6.5" width="9" height="1.3" fill="#d0d0d0"/></svg>
<div style="left:1390px;top:99.5px;width:245px;height:248.5px;background:#4d4d4d;"></div>
<div style="left:1396.5px;top:107.5px;width:20.5px;height:20.5px;background:#fff;border:1px solid #111;"></div>
<div style="left:1399.5px;top:110.5px;width:14.5px;height:14.5px;background:#3f7cc5;border:1px solid #111;"></div>
<div style="left:1424px;top:107px;width:188px;height:21.5px;background:#e0e0e0;border:1px solid #2b2b2b;"></div>
<div style="left:1426.5px;top:109.5px;width:82px;height:17px;background:#111;"></div>
<div style="left:1427.5px;top:110.5px;width:16px;height:15px;background:#ffffff;"></div>
<div style="left:1443.5px;top:110.5px;width:16px;height:15px;background:#b9a9a9;"></div>
<div style="left:1459.5px;top:110.5px;width:16px;height:15px;background:#b6b0a5;"></div>
<div style="left:1475.5px;top:110.5px;width:16px;height:15px;background:#c2decb;"></div>
<div style="left:1491.5px;top:110.5px;width:16px;height:15px;background:#8c90bc;"></div>
<div style="left:1427.5px;top:110.5px;width:15.5px;height:15px;background:#fff;border:1.500px solid #111;"></div>
<div style="left:1612px;top:107px;width:15.5px;height:21.5px;background:#5c5c5c;border:1px solid #2b2b2b;background:linear-gradient(#666,#555);"></div>
<svg style="left:1616.25px;top:116.25px;" width="7" height="4"><polygon points="0,0 7,0 3.5,4" fill="#e0e0e0"/></svg>
<span style="left:1412px;top:136px;height:14px;line-height:14px;font-size:11px;color:#e4e4e4;letter-spacing:-0.22px;">Schattierungen</span>
<svg style="left:1509.5px;top:140.75px;" width="6" height="3.5"><polygon points="0,0 6,0 3,3.5" fill="#e0e0e0"/></svg>
<span style="left:1567.2px;top:136px;height:14px;line-height:14px;font-size:11px;color:#e4e4e4;letter-spacing:-0.26px;">Farbtöne</span>
<div style="left:1396.5px;top:153.9px;width:232.48px;height:75.4px;background:#111;"></div>
<div style="left:1397.5px;top:154.9px;width:24.72px;height:13.88px;background:#1e1e1e;"></div>
<div style="left:1423.22px;top:154.9px;width:24.72px;height:13.88px;background:#6b6b6b;"></div>
<div style="left:1448.94px;top:154.9px;width:24.72px;height:13.88px;background:#a3a3a3;"></div>
<div style="left:1474.66px;top:154.9px;width:24.72px;height:13.88px;background:#d6d4d3;"></div>
<div style="left:1500.38px;top:154.9px;width:24.72px;height:13.88px;background:#ffffff;"></div>
<div style="left:1526.1px;top:154.9px;width:24.72px;height:13.88px;background:#ffffff;"></div>
<div style="left:1551.82px;top:154.9px;width:24.72px;height:13.88px;background:#ffffff;"></div>
<div style="left:1577.54px;top:154.9px;width:24.72px;height:13.88px;background:#ffffff;"></div>
<div style="left:1603.26px;top:154.9px;width:24.72px;height:13.88px;background:#ffffff;"></div>
<div style="left:1397.5px;top:169.78px;width:24.72px;height:13.88px;background:#1e1e1d;"></div>
<div style="left:1423.22px;top:169.78px;width:24.72px;height:13.88px;background:#5f5e5e;"></div>
<div style="left:1448.94px;top:169.78px;width:24.72px;height:13.88px;background:#878080;"></div>
<div style="left:1474.66px;top:169.78px;width:24.72px;height:13.88px;background:#a39898;"></div>
<div style="left:1500.38px;top:169.78px;width:24.72px;height:13.88px;background:#b8a9a9;"></div>
<div style="left:1526.1px;top:169.78px;width:24.72px;height:13.88px;background:#c2b5b4;"></div>
<div style="left:1551.82px;top:169.78px;width:24.72px;height:13.88px;background:#cec6c4;"></div>
<div style="left:1577.54px;top:169.78px;width:24.72px;height:13.88px;background:#ddd6d4;"></div>
<div style="left:1603.26px;top:169.78px;width:24.72px;height:13.88px;background:#edeae9;"></div>
<div style="left:1397.5px;top:184.66px;width:24.72px;height:13.88px;background:#1e1e1d;"></div>
<div style="left:1423.22px;top:184.66px;width:24.72px;height:13.88px;background:#5f5f5e;"></div>
<div style="left:1448.94px;top:184.66px;width:24.72px;height:13.88px;background:#8a8986;"></div>
<div style="left:1474.66px;top:184.66px;width:24.72px;height:13.88px;background:#a8a59d;"></div>
<div style="left:1500.38px;top:184.66px;width:24.72px;height:13.88px;background:#b5b0a4;"></div>
<div style="left:1526.1px;top:184.66px;width:24.72px;height:13.88px;background:#c4c1b6;"></div>
<div style="left:1551.82px;top:184.66px;width:24.72px;height:13.88px;background:#d2cec6;"></div>
<div style="left:1577.54px;top:184.66px;width:24.72px;height:13.88px;background:#dfdcd7;"></div>
<div style="left:1603.26px;top:184.66px;width:24.72px;height:13.88px;background:#efedeb;"></div>
<div style="left:1397.5px;top:199.54px;width:24.72px;height:13.88px;background:#1e1f1e;"></div>
<div style="left:1423.22px;top:199.54px;width:24.72px;height:13.88px;background:#686a69;"></div>
<div style="left:1448.94px;top:199.54px;width:24.72px;height:13.88px;background:#98a19c;"></div>
<div style="left:1474.66px;top:199.54px;width:24.72px;height:13.88px;background:#b5ccbd;"></div>
<div style="left:1500.38px;top:199.54px;width:24.72px;height:13.88px;background:#c2e0cb;"></div>
<div style="left:1526.1px;top:199.54px;width:24.72px;height:13.88px;background:#cde6d4;"></div>
<div style="left:1551.82px;top:199.54px;width:24.72px;height:13.88px;background:#daecdf;"></div>
<div style="left:1577.54px;top:199.54px;width:24.72px;height:13.88px;background:#e6f2e9;"></div>
<div style="left:1603.26px;top:199.54px;width:24.72px;height:13.88px;background:#f3f8f4;"></div>
<div style="left:1397.5px;top:214.42px;width:24.72px;height:13.88px;background:#1e1e1f;"></div>
<div style="left:1423.22px;top:214.42px;width:24.72px;height:13.88px;background:#616267;"></div>
<div style="left:1448.94px;top:214.42px;width:24.72px;height:13.88px;background:#7e8092;"></div>
<div style="left:1474.66px;top:214.42px;width:24.72px;height:13.88px;background:#8a8cad;"></div>
<div style="left:1500.38px;top:214.42px;width:24.72px;height:13.88px;background:#8c90bc;"></div>
<div style="left:1526.1px;top:214.42px;width:24.72px;height:13.88px;background:#a3a5c8;"></div>
<div style="left:1551.82px;top:214.42px;width:24.72px;height:13.88px;background:#babbd5;"></div>
<div style="left:1577.54px;top:214.42px;width:24.72px;height:13.88px;background:#d0d1e3;"></div>
<div style="left:1603.26px;top:214.42px;width:24.72px;height:13.88px;background:#e8e8f1;"></div>
<div style="left:1396.5px;top:229.5px;width:232px;height:99px;background:#4d4d4d;border:1px solid #2e2e2e;border-top:none;"></div>
<svg style="left:1402px;top:334px;" width="20" height="12"><rect x="0.500" y="0.500" width="12" height="8" fill="#9a9a9a" stroke="#d4d4d4"/><path d="M4.500,0.500V8.500M8.500,0.500V8.500M0.500,4.500H12.500" stroke="#4d4d4d" stroke-width="1"/><polygon points="14,8 19,8 16.500,11" fill="#d4d4d4"/></svg>
<span style="left:1428px;top:332.5px;height:14px;line-height:14px;font-size:11px;color:#e4e4e4;letter-spacing:-0.65px;">Ohne</span>
<svg style="left:1568.5px;top:333px;" width="13" height="13"><circle cx="6.500" cy="6.500" r="5.800" fill="#8a8a8a" stroke="#d0d0d0" stroke-width="1"/><circle cx="6.500" cy="6.500" r="1.800" fill="#333"/><path d="M6.500,0.700V4.500M6.500,8.500V12.300M1.500,3.600L4.800,5.500M8.200,7.500L11.500,9.400M1.500,9.400L4.800,7.500M8.200,5.500L11.500,3.600" stroke="#444" stroke-width="0.800"/></svg>
<svg style="left:1593px;top:334px;" width="17" height="11"><path d="M0,6.500H6M3,3.500V9.500" stroke="#e0e0e0" stroke-width="1.800"/><rect x="6.500" y="0.500" width="10" height="8" fill="#9a9a9a" stroke="#d4d4d4"/><rect x="10" y="1" width="3" height="7" fill="#c8c8c8"/></svg>
<svg style="left:1624px;top:338px;" width="9" height="9"><path d="M8,0v1M6,2v1M8,2v1M4,4v1M6,4v1M8,4v1M2,6v1M4,6v1M6,6v1M8,6v1M0,8v1M2,8v1M4,8v1M6,8v1M8,8v1" stroke="#2a2a2a" stroke-width="1"/></svg>
<div style="left:1390px;top:351px;width:245px;height:17px;background:#363636;border-bottom:1px solid #2b2b2b;"></div>
<div style="left:1390px;top:351px;width:76.5px;height:17.5px;background:#4d4d4d;border-top:1px solid #626262;border-right:1px solid #2b2b2b;"></div>
<svg style="left:1395px;top:354.5px;" width="7" height="10"><path d="M0.800,3.800 L3.300,1 L5.800,3.800 M0.800,6.200 L3.300,9 L5.800,6.200" fill="none" stroke="#d0d0d0" stroke-width="1.200"/></svg>
<span style="left:1404px;top:352px;height:14px;line-height:14px;font-size:11px;color:#e4e4e4;letter-spacing:-0.15px;">Ausrichten</span>
<svg style="left:1616.5px;top:355.5px;" width="15" height="9"><polygon points="0,2 5,2 2.5,5" fill="#d0d0d0"/><rect x="6" y="0.5" width="9" height="1.3" fill="#d0d0d0"/><rect x="6" y="3.5" width="9" height="1.3" fill="#d0d0d0"/><rect x="6" y="6.5" width="9" height="1.3" fill="#d0d0d0"/></svg>
<div style="left:1390px;top:368.5px;width:245px;height:166px;background:#4d4d4d;"></div>
<span style="left:1396px;top:373.8px;height:14px;line-height:14px;font-size:11px;color:#e4e4e4;letter-spacing:-0.43px;">Objekte ausrichten:</span>
<svg style="left:1400.4px;top:397px;" width="16" height="16"><rect x="1" y="0" width="1.3" height="15" fill="#d8d8d8"/><rect x="4" y="2" width="6" height="4.5" fill="#d8d8d8"/><g fill="none" stroke="#d8d8d8" stroke-width="1.2"><rect x="4.6" y="9.1" width="10" height="4"/></g></svg>
<svg style="left:1436.4px;top:397px;" width="16" height="16"><rect x="7.3" y="0" width="1.3" height="16" fill="#d8d8d8"/><rect x="5" y="2.5" width="6" height="4.5" fill="#d8d8d8"/><g fill="none" stroke="#d8d8d8" stroke-width="1.2"><rect x="2.6" y="9.6" width="10.8" height="4" fill="#4d4d4d"/></g></svg>
<svg style="left:1473.5px;top:397px;" width="16" height="16"><rect x="13.7" y="0" width="1.3" height="15" fill="#d8d8d8"/><rect x="6" y="2" width="6" height="4.5" fill="#d8d8d8"/><g fill="none" stroke="#d8d8d8" stroke-width="1.2"><rect x="1.4" y="9.1" width="10" height="4"/></g></svg>
<svg style="left:1532.9px;top:397px;" width="16" height="16"><rect x="0" y="1" width="15" height="1.3" fill="#d8d8d8"/><rect x="9" y="4" width="4.5" height="6" fill="#d8d8d8"/><g fill="none" stroke="#d8d8d8" stroke-width="1.2"><rect x="2.1" y="4.6" width="4" height="10"/></g></svg>
<svg style="left:1568.8px;top:397px;" width="16" height="16"><rect x="0" y="7.3" width="16" height="1.3" fill="#d8d8d8"/><rect x="9.5" y="5" width="4.5" height="6" fill="#d8d8d8"/><g fill="none" stroke="#d8d8d8" stroke-width="1.2"><rect x="2.6" y="2.6" width="4" height="10.8" fill="#4d4d4d"/></g></svg>
<svg style="left:1604.8px;top:397px;" width="16" height="16"><rect x="0" y="13.7" width="15" height="1.3" fill="#d8d8d8"/><rect x="9" y="6" width="4.5" height="6" fill="#d8d8d8"/><g fill="none" stroke="#d8d8d8" stroke-width="1.2"><rect x="2.1" y="1.4" width="4" height="10"/></g></svg>
<div style="left:1396px;top:423.5px;width:229px;height:1px;background:#3a3a3a;"></div>
<div style="left:1396px;top:424.5px;width:229px;height:1px;background:#555;"></div>
<span style="left:1396px;top:430.5px;height:14px;line-height:14px;font-size:11px;color:#e4e4e4;letter-spacing:-0.38px;">Objekte verteilen:</span>
<svg style="left:1400.4px;top:453.2px;" width="16" height="16"><rect x="0" y="1.500" width="16" height="1.200" fill="#d8d8d8"/><rect x="0" y="9.500" width="16" height="1.200" fill="#d8d8d8"/><rect x="5" y="2.500" width="6" height="4" fill="#d8d8d8"/><rect x="3.600" y="10.600" width="8.800" height="3.800" fill="none" stroke="#d8d8d8" stroke-width="1.200"/></svg>
<svg style="left:1436.9px;top:453.2px;" width="16" height="16"><rect x="0" y="4" width="16" height="1.200" fill="#d8d8d8"/><rect x="0" y="11.500" width="16" height="1.200" fill="#d8d8d8"/><rect x="5" y="2" width="6" height="5" fill="#d8d8d8"/><rect x="3.600" y="9.600" width="8.800" height="4.800" fill="#4d4d4d" stroke="#d8d8d8" stroke-width="1.200"/></svg>
<svg style="left:1473px;top:453.2px;" width="16" height="16"><rect x="0" y="6.500" width="16" height="1.200" fill="#d8d8d8"/><rect x="0" y="14.500" width="16" height="1.200" fill="#d8d8d8"/><rect x="5" y="2.500" width="6" height="4" fill="#d8d8d8"/><rect x="3.600" y="10.100" width="8.800" height="3.800" fill="none" stroke="#d8d8d8" stroke-width="1.200"/></svg>
<svg style="left:1533.6px;top:453.2px;" width="16" height="16"><rect x="1.500" y="0" width="1.200" height="16" fill="#d8d8d8"/><rect x="9.500" y="0" width="1.200" height="16" fill="#d8d8d8"/><rect x="10.500" y="5" width="4" height="6" fill="#d8d8d8"/><rect x="2.600" y="3.600" width="3.800" height="8.800" fill="none" stroke="#d8d8d8" stroke-width="1.200"/></svg>
<svg style="left:1570px;top:453.2px;" width="16" height="16"><rect x="4" y="0" width="1.200" height="16" fill="#d8d8d8"/><rect x="11.500" y="0" width="1.200" height="16" fill="#d8d8d8"/><rect x="9.500" y="5" width="5" height="6" fill="#d8d8d8"/><rect x="2.100" y="3.600" width="4.800" height="8.800" fill="#4d4d4d" stroke="#d8d8d8" stroke-width="1.200"/></svg>
<svg style="left:1604px;top:453.2px;" width="16" height="16"><rect x="6.500" y="0" width="1.200" height="16" fill="#d8d8d8"/><rect x="14.500" y="0" width="1.200" height="16" fill="#d8d8d8"/><rect x="2.500" y="5" width="4" height="6" fill="#d8d8d8"/><rect x="10.100" y="3.600" width="3.800" height="8.800" fill="none" stroke="#d8d8d8" stroke-width="1.200"/></svg>
<div style="left:1396px;top:479.5px;width:229px;height:1px;background:#3a3a3a;"></div>
<div style="left:1396px;top:480.5px;width:229px;height:1px;background:#555;"></div>
<span style="left:1396px;top:486.3px;height:14px;line-height:14px;font-size:11px;color:#e4e4e4;letter-spacing:-0.5px;">Abstand verteilen:</span>
<span style="left:1555px;top:487px;height:14px;line-height:14px;font-size:11px;color:#e4e4e4;letter-spacing:-0.57px;">Ausrichten an:</span>
<div style="left:1549px;top:485px;width:1px;height:46px;background:#3a3a3a;"></div>
<div style="left:1550px;top:485px;width:1px;height:46px;background:#555;"></div>
<svg style="left:1401px;top:510px;" width="15" height="14"><rect x="0" y="4" width="5" height="1.200" fill="#d8d8d8"/><rect x="0" y="8.500" width="5" height="1.200" fill="#d8d8d8"/><rect x="6" y="0.500" width="6" height="4" fill="#d8d8d8"/><rect x="5.600" y="8.600" width="8.800" height="4.300" fill="none" stroke="#d8d8d8" stroke-width="1.200"/></svg>
<svg style="left:1433px;top:509px;" width="14" height="15"><rect x="4" y="0" width="1.200" height="5" fill="#d8d8d8"/><rect x="8.500" y="0" width="1.200" height="5" fill="#d8d8d8"/><rect x="9" y="6" width="4.500" height="5" fill="#d8d8d8"/><rect x="1.100" y="5.600" width="3.800" height="8.800" fill="none" stroke="#d8d8d8" stroke-width="1.200"/></svg>
<div style="left:1459.5px;top:508px;width:17.5px;height:17.5px;background:#585858;border:1px solid #2b2b2b;"></div>
<div style="left:1460.5px;top:516.25px;width:15.5px;height:1px;background:#3a3a3a;"></div>
<svg style="left:1465.25px;top:511.48px;" width="6" height="3.5"><polygon points="0,3.5 6,3.5 3,0" fill="#7a7a7a"/></svg>
<svg style="left:1465.25px;top:519.52px;" width="6" height="3.5"><polygon points="0,0 6,0 3,3.5" fill="#7a7a7a"/></svg>
<div style="left:1476.5px;top:508px;width:65.5px;height:17.5px;background:#6e6e6e;border:1px solid #2b2b2b;"></div>
<span style="left:1480.5px;top:509.45px;height:14px;line-height:14px;font-size:11px;color:#8c8c8c;font-weight:normal;letter-spacing:-0.37px;">0 mm</span>
<svg style="left:1561px;top:508.5px;" width="16" height="17"><rect x="3.500" y="3.500" width="9" height="9" fill="none" stroke="#d8d8d8" stroke-width="1.200"/><path d="M0,3.500H3M13,3.500H16M0,12.500H3M13,12.500H16M3.500,0V3M12.500,0V3M3.500,13V16M12.500,13V16" stroke="#d8d8d8" stroke-width="1" stroke-dasharray="1 1"/><path d="M6,6h1.500M8.500,6H10M6,10h1.500M8.500,10H10M6,6v1.500M6,8.500V10M10,6v1.500M10,8.500V10" stroke="#d8d8d8" stroke-width="1"/></svg>
<svg style="left:1579px;top:515.75px;" width="6" height="3.5"><polygon points="0,0 6,0 3,3.5" fill="#e0e0e0"/></svg>
<div style="left:1390px;top:538px;width:245px;height:17px;background:#363636;border-bottom:1px solid #2b2b2b;"></div>
<div style="left:1390px;top:538px;width:60.5px;height:17.5px;background:#4d4d4d;border-top:1px solid #626262;border-right:1px solid #2b2b2b;"></div>
<svg style="left:1395px;top:541.5px;" width="7" height="10"><path d="M0.800,3.800 L3.300,1 L5.800,3.800 M0.800,6.200 L3.300,9 L5.800,6.200" fill="none" stroke="#d0d0d0" stroke-width="1.200"/></svg>
<span style="left:1404px;top:539px;height:14px;line-height:14px;font-size:11px;color:#e4e4e4;letter-spacing:-0.22px;">Zeichen</span>
<div style="left:1450.5px;top:538px;width:48.5px;height:16px;background:#434343;border-top:1px solid #505050;border-right:1px solid #2b2b2b;"></div>
<span style="left:1457px;top:539px;height:14px;line-height:14px;font-size:11px;color:#bdbdbd;letter-spacing:-0.18px;">Absatz</span>
<div style="left:1499px;top:538px;width:67px;height:16px;background:#434343;border-top:1px solid #505050;border-right:1px solid #2b2b2b;"></div>
<span style="left:1506px;top:539px;height:14px;line-height:14px;font-size:11px;color:#bdbdbd;letter-spacing:-0.12px;">OpenType</span>
<svg style="left:1616.5px;top:542.5px;" width="15" height="9"><polygon points="0,2 5,2 2.5,5" fill="#d0d0d0"/><rect x="6" y="0.5" width="9" height="1.3" fill="#d0d0d0"/><rect x="6" y="3.5" width="9" height="1.3" fill="#d0d0d0"/><rect x="6" y="6.5" width="9" height="1.3" fill="#d0d0d0"/></svg>
<div style="left:1390px;top:555.5px;width:245px;height:148px;background:#4d4d4d;"></div>
<div style="left:1397px;top:562.5px;width:174px;height:23.5px;background:#5a5a5a;border:1px solid #353535;background:linear-gradient(#606060,#565656);"></div>
<svg style="left:1404.5px;top:566px;" width="16" height="16"><rect x="2" y="2" width="12" height="12" fill="none" stroke="#e0e0e0" stroke-width="1.200"/><circle cx="2" cy="2" r="1.700" fill="#e0e0e0"/><circle cx="14" cy="2" r="1.700" fill="#e0e0e0"/><circle cx="2" cy="14" r="1.700" fill="#e0e0e0"/><circle cx="14" cy="14" r="1.700" fill="#e0e0e0"/><path d="M5,5.500H11M8,5.500V11.500M6.500,11.500H9.500M5,5.500V7M11,5.500V7" stroke="#e0e0e0" stroke-width="1.100" fill="none"/></svg>
<span style="left:1428.4px;top:566.8px;height:14px;line-height:14px;font-size:11px;color:#e4e4e4;letter-spacing:-0.14px;">Touch-Type-Textwerkzeug</span>
<div style="left:1397px;top:593.5px;width:210px;height:18px;background:#a9a9a9;border:1px solid #2b2b2b;"></div>
<svg style="left:1400px;top:596px;" width="20" height="14"><circle cx="8.500" cy="5.500" r="3.800" fill="none" stroke="#222" stroke-width="1.200"/><line x1="6" y1="8.200" x2="1.500" y2="12.500" stroke="#222" stroke-width="1.400"/><polygon points="13,10 17,10 15,12.500" fill="#222"/></svg>
<span style="left:1422px;top:595px;height:14px;line-height:14px;font-size:11px;color:#000;font-weight:normal;letter-spacing:0.1px;">Aller Light</span>
<div style="left:1607px;top:593.5px;width:18.5px;height:18px;background:#5c5c5c;border:1px solid #2b2b2b;background:linear-gradient(#666,#555);"></div>
<svg style="left:1612.75px;top:601px;" width="7" height="4"><polygon points="0,0 7,0 3.5,4" fill="#e0e0e0"/></svg>
<div style="left:1397px;top:619.5px;width:209px;height:18px;background:#a9a9a9;border:1px solid #2b2b2b;"></div>
<span style="left:1401px;top:621.2px;height:14px;line-height:14px;font-size:11px;color:#000;font-weight:normal;letter-spacing:-0.22px;">Regular</span>
<div style="left:1606px;top:619.5px;width:19px;height:18px;background:#5c5c5c;border:1px solid #2b2b2b;background:linear-gradient(#666,#555);"></div>
<svg style="left:1612px;top:627px;" width="7" height="4"><polygon points="0,0 7,0 3.5,4" fill="#e0e0e0"/></svg>
<div style="left:1396px;top:645px;width:229px;height:1px;background:#3a3a3a;"></div>
<div style="left:1396px;top:646px;width:229px;height:1px;background:#555;"></div>
<svg style="left:1396px;top:652px;" width="19" height="18"><text x="0" y="15" font-size="11" fill="#d8d8d8" style="font-family:'Liberation Serif',serif;font-weight:normal">T</text><text x="5" y="15" font-size="17" fill="#d8d8d8" style="font-family:'Liberation Serif',serif;font-weight:normal">T</text></svg>
<div style="left:1418px;top:653px;width:17.5px;height:17.5px;background:#5c5c5c;border:1px solid #2b2b2b;background:linear-gradient(#666,#555);"></div>
<div style="left:1419px;top:661.25px;width:15.5px;height:1px;background:#3a3a3a;"></div>
<svg style="left:1423.75px;top:656.48px;" width="6" height="3.5"><polygon points="0,3.5 6,3.5 3,0" fill="#e0e0e0"/></svg>
<svg style="left:1423.75px;top:664.52px;" width="6" height="3.5"><polygon points="0,0 6,0 3,3.5" fill="#e0e0e0"/></svg>
<div style="left:1435.5px;top:653px;width:53px;height:17.5px;background:#a9a9a9;border:1px solid #2b2b2b;"></div>
<span style="left:1439.5px;top:654.45px;height:14px;line-height:14px;font-size:11px;color:#000;font-weight:normal;letter-spacing:0.31px;">60 pt</span>
<div style="left:1488.5px;top:653px;width:15px;height:17.5px;background:#5c5c5c;border:1px solid #2b2b2b;background:linear-gradient(#666,#555);"></div>
<svg style="left:1492.5px;top:660.25px;" width="7" height="4"><polygon points="0,0 7,0 3.5,4" fill="#e0e0e0"/></svg>
<svg style="left:1517px;top:651px;" width="18" height="21"><text x="6" y="8.500" font-size="9" fill="#d8d8d8" style="font-family:'Liberation Sans',sans-serif;font-weight:normal">A</text><text x="6" y="19" font-size="9" fill="#d8d8d8" style="font-family:'Liberation Sans',sans-serif;font-weight:normal">A</text><path d="M5,9.500H14M5,20H14" stroke="#d8d8d8" stroke-width="1"/><path d="M2.500,11V19M0.500,13L2.500,11L4.500,13M0.500,17L2.500,19L4.500,17" fill="none" stroke="#d8d8d8" stroke-width="1"/></svg>
<div style="left:1539px;top:653px;width:17.5px;height:17.5px;background:#5c5c5c;border:1px solid #2b2b2b;background:linear-gradient(#666,#555);"></div>
<div style="left:1540px;top:661.25px;width:15.5px;height:1px;background:#3a3a3a;"></div>
<svg style="left:1544.75px;top:656.48px;" width="6" height="3.5"><polygon points="0,3.5 6,3.5 3,0" fill="#e0e0e0"/></svg>
<svg style="left:1544.75px;top:664.52px;" width="6" height="3.5"><polygon points="0,0 6,0 3,3.5" fill="#e0e0e0"/></svg>
<div style="left:1556.5px;top:653px;width:53px;height:17.5px;background:#a9a9a9;border:1px solid #2b2b2b;"></div>
<span style="left:1560.5px;top:654.45px;height:14px;line-height:14px;font-size:11px;color:#000;font-weight:normal;letter-spacing:0.37px;">110 pt</span>
<div style="left:1609.5px;top:653px;width:15.5px;height:17.5px;background:#5c5c5c;border:1px solid #2b2b2b;background:linear-gradient(#666,#555);"></div>
<svg style="left:1613.75px;top:660.25px;" width="7" height="4"><polygon points="0,0 7,0 3.5,4" fill="#e0e0e0"/></svg>
<svg style="left:1395px;top:678px;" width="22" height="20"><text x="0" y="14" font-size="14" fill="#d8d8d8" style="font-family:'Liberation Sans',sans-serif;font-weight:normal">V</text><text x="8" y="14" font-size="14" fill="#d8d8d8" style="font-family:'Liberation Sans',sans-serif;font-weight:normal">A</text><path d="M8,1L4,15" stroke="#d8d8d8" stroke-width="1"/><path d="M9,17.500H17M11,15.500L9,17.500L11,19.500" fill="none" stroke="#d8d8d8" stroke-width="1"/></svg>
<div style="left:1418px;top:678.5px;width:17.5px;height:17.5px;background:#5c5c5c;border:1px solid #2b2b2b;background:linear-gradient(#666,#555);"></div>
<div style="left:1419px;top:686.75px;width:15.5px;height:1px;background:#3a3a3a;"></div>
<svg style="left:1423.75px;top:681.98px;" width="6" height="3.5"><polygon points="0,3.5 6,3.5 3,0" fill="#e0e0e0"/></svg>
<svg style="left:1423.75px;top:690.02px;" width="6" height="3.5"><polygon points="0,0 6,0 3,3.5" fill="#e0e0e0"/></svg>
<div style="left:1435.5px;top:678.5px;width:53px;height:17.5px;background:#a9a9a9;border:1px solid #2b2b2b;"></div>
<span style="left:1439.5px;top:679.95px;height:14px;line-height:14px;font-size:11px;color:#000;font-weight:normal;letter-spacing:0.07px;">Automati</span>
<div style="left:1488.5px;top:678.5px;width:15px;height:17.5px;background:#5c5c5c;border:1px solid #2b2b2b;background:linear-gradient(#666,#555);"></div>
<svg style="left:1492.5px;top:685.75px;" width="7" height="4"><polygon points="0,0 7,0 3.5,4" fill="#e0e0e0"/></svg>
<svg style="left:1516px;top:676px;" width="22" height="22"><text x="1" y="13" font-size="13" fill="#d8d8d8" textLength="18" style="font-family:'Liberation Sans',sans-serif;font-weight:normal">VA</text><path d="M1,1.500H20M1,15H20" stroke="#d8d8d8" stroke-width="1"/><path d="M2,19H19M4,17L2,19L4,21M17,17L19,19L17,21" fill="none" stroke="#d8d8d8" stroke-width="1"/></svg>
<div style="left:1539px;top:678.5px;width:17.5px;height:17.5px;background:#5c5c5c;border:1px solid #2b2b2b;background:linear-gradient(#666,#555);"></div>
<div style="left:1540px;top:686.75px;width:15.5px;height:1px;background:#3a3a3a;"></div>
<svg style="left:1544.75px;top:681.98px;" width="6" height="3.5"><polygon points="0,3.5 6,3.5 3,0" fill="#e0e0e0"/></svg>
<svg style="left:1544.75px;top:690.02px;" width="6" height="3.5"><polygon points="0,0 6,0 3,3.5" fill="#e0e0e0"/></svg>
<div style="left:1556.5px;top:678.5px;width:53px;height:17.5px;background:#a9a9a9;border:1px solid #2b2b2b;"></div>
<span style="left:1560.5px;top:679.95px;height:14px;line-height:14px;font-size:11px;color:#000;font-weight:normal;">0</span>
<div style="left:1609.5px;top:678.5px;width:15.5px;height:17.5px;background:#5c5c5c;border:1px solid #2b2b2b;background:linear-gradient(#666,#555);"></div>
<svg style="left:1613.75px;top:685.75px;" width="7" height="4"><polygon points="0,0 7,0 3.5,4" fill="#e0e0e0"/></svg>
<div style="left:1390px;top:706px;width:245px;height:17px;background:#363636;border-bottom:1px solid #2b2b2b;"></div>
<div style="left:1390px;top:706px;width:45px;height:17.5px;background:#4d4d4d;border-top:1px solid #626262;border-right:1px solid #2b2b2b;"></div>
<span style="left:1398px;top:707px;height:14px;line-height:14px;font-size:11px;color:#e4e4e4;letter-spacing:-0.32px;">Pinsel</span>
<div style="left:1435px;top:706px;width:56.5px;height:16px;background:#434343;border-top:1px solid #505050;border-right:1px solid #2b2b2b;"></div>
<span style="left:1441.5px;top:707px;height:14px;line-height:14px;font-size:11px;color:#bdbdbd;letter-spacing:-0.26px;">Symbole</span>
<svg style="left:1616.5px;top:710.5px;" width="15" height="9"><polygon points="0,2 5,2 2.5,5" fill="#d0d0d0"/><rect x="6" y="0.5" width="9" height="1.3" fill="#d0d0d0"/><rect x="6" y="3.5" width="9" height="1.3" fill="#d0d0d0"/><rect x="6" y="6.5" width="9" height="1.3" fill="#d0d0d0"/></svg>
<div style="left:1390px;top:723.5px;width:245px;height:258.5px;background:#4d4d4d;"></div>
<div style="left:1396px;top:729px;width:233px;height:232px;background:#4d4d4d;border:1px solid #2e2e2e;"></div>
<div style="left:1616px;top:730px;width:12.5px;height:230px;background:#3c3c3c;"></div>
<svg style="left:1619px;top:735px;" width="7" height="4"><polygon points="0,4 7,4 3.5,0" fill="#9a9a9a"/></svg>
<svg style="left:1619px;top:951.5px;" width="7" height="4"><polygon points="0,0 7,0 3.5,4" fill="#9a9a9a"/></svg>
<div style="left:1397px;top:729.7px;width:32px;height:32.3px;background:#e6e6e6;"></div>
<svg style="left:1397px;top:729.7px;" width="32" height="32.3"><ellipse cx="16" cy="16" rx="0.9" ry="0.6" fill="#000"/></svg>
<div style="left:1429.9px;top:729.7px;width:32px;height:32.3px;background:#e6e6e6;"></div>
<svg style="left:1429.9px;top:729.7px;" width="32" height="32.3"><ellipse cx="16" cy="16" rx="2.2" ry="1.3" fill="#000"/></svg>
<div style="left:1462.8px;top:729.7px;width:32px;height:32.3px;background:#e6e6e6;"></div>
<svg style="left:1462.8px;top:729.7px;" width="32" height="32.3"><ellipse cx="16" cy="16" rx="0.3" ry="2.2" fill="#999"/></svg>
<div style="left:1495.7px;top:729.7px;width:32px;height:32.3px;background:#e6e6e6;"></div>
<svg style="left:1495.7px;top:729.7px;" width="32" height="32.3"><ellipse cx="16" cy="16" rx="1.5" ry="1.5" fill="#000"/></svg>
<div style="left:1528.6px;top:729.7px;width:32px;height:32.3px;background:#e6e6e6;"></div>
<svg style="left:1528.6px;top:729.7px;" width="32" height="32.3"><ellipse cx="16" cy="16" rx="3.6" ry="3.6" fill="#000"/></svg>
<div style="left:1561.5px;top:729.7px;width:32px;height:32.3px;background:#e6e6e6;"></div>
<svg style="left:1561.5px;top:729.7px;" width="32" height="32.3"><ellipse cx="16" cy="16" rx="7.5" ry="7.5" fill="#000"/></svg>
<div style="left:1397px;top:763.3px;width:32px;height:32px;background:#e6e6e6;"></div>
<svg style="left:1397px;top:763.3px;" width="32" height="32"><circle cx="16" cy="15.500" r="6.200" fill="#000"/></svg>
<div style="left:1397px;top:796.2px;width:217.5px;height:32px;background:#e6e6e6;"></div>
<div style="left:1397px;top:829px;width:217.5px;height:32px;background:#e6e6e6;"></div>
<div style="left:1397px;top:862px;width:217.5px;height:32px;background:#e6e6e6;"></div>
<div style="left:1397px;top:895px;width:217.5px;height:32px;background:#e6e6e6;"></div>
<div style="left:1402px;top:810.8px;width:167px;height:1.8px;background:#000;"></div>
<span style="left:1574px;top:805px;height:14px;line-height:14px;font-size:11px;color:#111;font-weight:normal;letter-spacing:-0.24px;">Einfach</span>
<svg style="left:1397px;top:829px;" width="217.5" height="32"><path d="M5.0,14.0 L7.2,14.6 L9.4,14.2 L11.6,12.9 L13.8,12.7 L16.0,12.7 L18.2,13.3 L20.4,12.5 L22.6,13.4 L24.8,13.2 L27.0,13.9 L29.2,13.5 L31.4,11.8 L33.6,12.0 L35.8,11.6 L38.0,12.5 L40.2,12.1 L42.4,10.9 L44.6,12.1 L46.8,11.2 L49.0,11.4 L51.2,12.0 L53.4,10.6 L55.6,11.1 L57.8,11.4 L60.0,11.8 L62.2,10.5 L64.4,9.9 L66.6,9.6 L68.8,11.2 L71.0,11.4 L73.2,11.0 L75.4,10.7 L77.6,11.3 L79.8,10.5 L82.0,9.5 L84.2,10.8 L86.4,11.2 L88.6,10.2 L90.8,9.4 L93.0,9.7 L95.2,9.4 L97.4,9.6 L99.6,10.1 L101.8,9.4 L104.0,10.4 L106.2,11.0 L108.4,9.8 L110.6,9.9 L112.8,11.3 L115.0,9.5 L117.2,9.6 L119.4,10.4 L121.6,9.1 L123.8,9.9 L126.0,11.1 L128.2,10.2 L130.4,10.5 L132.6,11.0 L134.8,10.9 L137.0,9.8 L139.2,9.2 L141.4,9.1 L143.6,9.4 L145.8,9.7 L148.0,8.9 L150.2,9.1 L152.4,9.0 L154.6,10.2 L156.8,9.4 L159.0,9.7 L161.2,10.9 L163.4,10.1 L165.6,9.3 L167.8,10.0 L170.0,11.1 L172.2,9.5 L174.4,10.7 L176.6,10.8 L178.8,10.8 L181.0,11.6 L183.2,10.4 L185.4,10.3 L187.6,11.2 L189.8,10.8 L192.0,11.9 L194.2,12.1 L196.4,12.6 L198.6,11.5 L200.8,12.0 L203.0,11.4 L205.2,12.2 L207.4,13.9 L209.6,14.0 L211.8,14.3 L211.8,14.0 L209.6,15.6 L207.4,14.6 L205.2,15.4 L203.0,14.7 L200.8,14.3 L198.6,15.6 L196.4,16.3 L194.2,17.0 L192.0,17.5 L189.8,15.9 L187.6,17.2 L185.4,17.3 L183.2,16.5 L181.0,17.3 L178.8,18.1 L176.6,16.1 L174.4,16.4 L172.2,18.3 L170.0,16.7 L167.8,17.0 L165.6,16.7 L163.4,17.7 L161.2,18.9 L159.0,17.1 L156.8,17.6 L154.6,17.2 L152.4,18.8 L150.2,17.7 L148.0,17.2 L145.8,17.0 L143.6,17.3 L141.4,17.1 L139.2,18.4 L137.0,17.9 L134.8,18.7 L132.6,18.7 L130.4,17.1 L128.2,18.4 L126.0,18.6 L123.8,18.3 L121.6,18.0 L119.4,17.7 L117.2,18.2 L115.0,17.6 L112.8,17.5 L110.6,19.1 L108.4,18.1 L106.2,19.1 L104.0,19.2 L101.8,18.2 L99.6,19.2 L97.4,17.8 L95.2,19.0 L93.0,17.6 L90.8,18.3 L88.6,18.8 L86.4,18.0 L84.2,19.6 L82.0,19.0 L79.8,18.9 L77.6,19.5 L75.4,18.5 L73.2,18.8 L71.0,18.2 L68.8,18.8 L66.6,19.0 L64.4,18.7 L62.2,19.3 L60.0,17.8 L57.8,18.1 L55.6,19.3 L53.4,18.6 L51.2,18.8 L49.0,17.8 L46.8,18.3 L44.6,17.9 L42.4,17.3 L40.2,16.9 L38.0,17.5 L35.8,17.9 L33.6,18.3 L31.4,16.7 L29.2,17.0 L27.0,16.4 L24.8,17.1 L22.6,18.2 L20.4,16.5 L18.2,17.8 L16.0,16.0 L13.8,16.7 L11.6,16.8 L9.4,16.4 L7.2,15.6 L5.0,15.7Z M58.0,18.5 L60.0,18.4 L62.0,19.2 L64.0,18.9 L66.0,18.6 L68.0,17.5 L70.0,19.0 L72.0,18.7 L74.0,17.6 L76.0,17.9 L78.0,19.0 L80.0,18.0 L82.0,18.5 L84.0,17.4 L86.0,18.8 L88.0,17.4 L90.0,18.9 L92.0,17.8 L94.0,17.3 L96.0,18.8 L98.0,18.0 L100.0,17.8 L102.0,18.5 L104.0,17.5 L106.0,17.4 L108.0,17.4 L110.0,17.2 L112.0,17.5 L114.0,17.9 L116.0,17.6 L118.0,17.8 L120.0,17.8 L122.0,17.6 L124.0,16.8 L126.0,17.1 L128.0,18.0 L130.0,17.3 L132.0,17.7 L134.0,16.9 L136.0,17.1 L138.0,18.0 L140.0,18.2 L142.0,18.8 L144.0,18.3 L146.0,18.1 L148.0,17.9 L150.0,18.0 L150.0,19.8 L148.0,19.1 L146.0,19.4 L144.0,19.1 L142.0,19.0 L140.0,19.6 L138.0,19.7 L136.0,19.4 L134.0,19.9 L132.0,20.3 L130.0,19.9 L128.0,19.9 L126.0,19.8 L124.0,20.4 L122.0,19.3 L120.0,19.1 L118.0,20.0 L116.0,20.7 L114.0,20.7 L112.0,19.9 L110.0,20.8 L108.0,19.9 L106.0,20.2 L104.0,19.7 L102.0,19.6 L100.0,20.8 L98.0,20.9 L96.0,20.5 L94.0,19.3 L92.0,20.3 L90.0,20.5 L88.0,20.9 L86.0,20.8 L84.0,19.7 L82.0,19.7 L80.0,21.2 L78.0,20.2 L76.0,20.9 L74.0,20.9 L72.0,20.4 L70.0,21.0 L68.0,20.8 L66.0,21.1 L64.0,20.5 L62.0,20.7 L60.0,19.4 L58.0,19.5Z M120.0,17.2 L122.0,17.5 L124.0,16.8 L126.0,17.2 L128.0,15.9 L130.0,15.8 L132.0,15.7 L134.0,16.9 L136.0,15.7 L138.0,16.6 L140.0,16.9 L142.0,15.7 L144.0,16.0 L146.0,17.0 L148.0,15.4 L150.0,16.0 L152.0,15.4 L154.0,16.3 L156.0,15.9 L158.0,14.9 L160.0,15.9 L162.0,14.9 L164.0,16.1 L166.0,14.8 L168.0,14.7 L170.0,15.0 L172.0,15.2 L174.0,15.9 L176.0,14.6 L178.0,15.3 L180.0,14.4 L182.0,15.4 L184.0,14.3 L186.0,15.2 L188.0,14.2 L190.0,14.1 L192.0,14.7 L194.0,14.9 L196.0,14.3 L198.0,14.7 L200.0,13.9 L200.0,16.0 L198.0,16.2 L196.0,16.0 L194.0,17.5 L192.0,16.5 L190.0,17.5 L188.0,17.6 L186.0,17.5 L184.0,17.8 L182.0,17.0 L180.0,16.4 L178.0,17.6 L176.0,18.0 L174.0,16.9 L172.0,18.1 L170.0,16.8 L168.0,18.0 L166.0,17.1 L164.0,18.4 L162.0,18.5 L160.0,17.7 L158.0,17.5 L156.0,17.7 L154.0,17.0 L152.0,17.6 L150.0,17.7 L148.0,17.9 L146.0,18.7 L144.0,18.1 L142.0,19.0 L140.0,19.1 L138.0,17.7 L136.0,18.7 L134.0,19.1 L132.0,18.8 L130.0,18.1 L128.0,18.5 L126.0,18.0 L124.0,19.5 L122.0,18.3 L120.0,19.5Z" fill="#000"/><path d="M38.1,14.0 l11.6,-0.1 M151.5,14.0 l13.2,-0.1 M85.5,13.2 l8.3,-0.1 M147.3,12.5 l17.9,-0.3 M179.5,15.5 l9.9,-0.1 M109.2,13.7 l23.0,-0.3 M140.0,13.3 l25.7,-0.5 M143.1,13.6 l19.4,-0.2 M38.7,12.8 l10.3,-0.2 M70.9,12.5 l10.9,-0.2 M169.3,12.8 l20.1,-0.2 M76.9,12.8 l16.3,-0.2 M72.1,17.0 l25.3,-0.4 M69.1,13.7 l25.4,-0.3 " stroke="#e6e6e6" stroke-width="0.9" fill="none"/><rect x="10.2" y="19.1" width="1.2" height="0.9" fill="#000"/><rect x="141.2" y="9.0" width="0.8" height="0.9" fill="#000"/><rect x="62.8" y="10.8" width="1.7" height="0.9" fill="#000"/><rect x="88.8" y="18.9" width="1.2" height="0.9" fill="#000"/><rect x="127.1" y="8.7" width="1.9" height="0.9" fill="#000"/><rect x="185.8" y="19.7" width="2.0" height="0.9" fill="#000"/><rect x="108.8" y="19.9" width="1.8" height="0.9" fill="#000"/><rect x="18.8" y="20.9" width="2.1" height="0.9" fill="#000"/><rect x="37.9" y="9.0" width="1.7" height="0.9" fill="#000"/><rect x="188.6" y="10.1" width="0.9" height="0.9" fill="#000"/><rect x="137.4" y="9.4" width="1.5" height="0.9" fill="#000"/><rect x="20.2" y="9.8" width="1.9" height="0.9" fill="#000"/><rect x="107.9" y="9.4" width="0.9" height="0.9" fill="#000"/><rect x="196.5" y="8.4" width="0.9" height="0.9" fill="#000"/><rect x="157.4" y="19.9" width="2.2" height="0.9" fill="#000"/><rect x="57.0" y="10.6" width="1.8" height="0.9" fill="#000"/><rect x="102.1" y="18.1" width="2.3" height="0.9" fill="#000"/><rect x="67.5" y="9.3" width="1.8" height="0.9" fill="#000"/><rect x="25.5" y="10.7" width="1.8" height="0.9" fill="#000"/><rect x="148.6" y="10.5" width="0.9" height="0.9" fill="#000"/><rect x="63.8" y="9.1" width="1.9" height="0.9" fill="#000"/><rect x="68.2" y="19.5" width="1.5" height="0.9" fill="#000"/><rect x="33.7" y="10.6" width="0.9" height="0.9" fill="#000"/><rect x="104.6" y="19.2" width="2.1" height="0.9" fill="#000"/><rect x="203.6" y="20.3" width="1.4" height="0.9" fill="#000"/><rect x="193.3" y="10.1" width="0.9" height="0.9" fill="#000"/><rect x="159.5" y="20.3" width="1.0" height="0.9" fill="#000"/><rect x="174.0" y="20.1" width="1.9" height="0.9" fill="#000"/><rect x="56.3" y="19.5" width="1.1" height="0.9" fill="#000"/><rect x="200.0" y="18.5" width="2.0" height="0.9" fill="#000"/><rect x="93.2" y="18.9" width="2.1" height="0.9" fill="#000"/><rect x="10.3" y="21.4" width="1.0" height="0.9" fill="#000"/><rect x="195.3" y="7.6" width="1.3" height="0.9" fill="#000"/><rect x="84.4" y="19.2" width="2.2" height="0.9" fill="#000"/><rect x="25.3" y="20.9" width="2.2" height="0.9" fill="#000"/><rect x="66.1" y="8.7" width="1.3" height="0.9" fill="#000"/><rect x="197.1" y="7.4" width="1.5" height="0.9" fill="#000"/><rect x="73.1" y="20.4" width="1.5" height="0.9" fill="#000"/><rect x="15.8" y="21.5" width="2.3" height="0.9" fill="#000"/><rect x="119.8" y="10.5" width="2.0" height="0.9" fill="#000"/></svg>
<svg style="left:1397px;top:862px;" width="217.5" height="32"><path d="M3,9.5 Q1.5,4 7,3 Q12.5,2.5 12.5,7 Q12,9.500 9.500,9 Q11,6.500 8,6 Q5.500,6.500 6.500,9.500 Q9,14 20,13.500 Q35,12.500 48,12.800 Q56,12.400 70,12.600 L212,12.200 Q214,13.200 212,14.200 L70,14.600 Q56,15 48,15.200 Q40,16 30,18 Q14,20.500 6,16 Q3.200,13.500 3,9.500 Z" fill="#000"/><path d="M25,12.500 Q22,6.500 28,4 Q33,2.500 35,5.500 Q31,5.500 30.500,8 Q31,10.500 34,10 Q33,5 39,3.500 Q44,2.800 45,6 Q41,5.500 40.500,8 Q41.500,10 44,9.500 Q44.500,6.500 49,6 Q53,6.200 52.500,9 Q50,8 49,9.800 Q50,11.500 55,11 L62,12 L40,13.500 Z" fill="#000"/><path d="M33,16.500 Q30,20 33,23 Q37,26 41,24 Q44,22 42.500,19.500 Q41.500,22 38.500,21.500 Q36,20 38,17.500 Q41,16 46,16 L50,15 Z" fill="#000"/><circle cx="47" cy="19" r="1.300" fill="#000"/><circle cx="57" cy="9.500" r="1.100" fill="#000"/></svg>
<svg style="left:1397px;top:895px;" width="217.5" height="32"><path d="M1,1 H30 V10 H14 V31.500 H1 Z" fill="none" stroke="#000" stroke-width="1"/><circle cx="7.8" cy="5.6" r="1.4" fill="none" stroke="#000" stroke-width="0.9"/><circle cx="2.2" cy="19.3" r="0.9" fill="none" stroke="#000" stroke-width="0.9"/><circle cx="23.7" cy="3.4" r="1.2" fill="none" stroke="#000" stroke-width="0.9"/><circle cx="10.3" cy="14.9" r="1.5" fill="none" stroke="#000" stroke-width="0.9"/><circle cx="18.4" cy="2.6" r="1.7" fill="none" stroke="#000" stroke-width="0.9"/><circle cx="9.3" cy="16.4" r="1.8" fill="none" stroke="#000" stroke-width="0.9"/><circle cx="3.2" cy="7.2" r="1.7" fill="none" stroke="#000" stroke-width="0.9"/><circle cx="10.6" cy="2.4" r="1.5" fill="none" stroke="#000" stroke-width="0.9"/><circle cx="20.5" cy="8.1" r="1.8" fill="none" stroke="#000" stroke-width="0.9"/><circle cx="9.9" cy="12.8" r="1.5" fill="none" stroke="#000" stroke-width="0.9"/><circle cx="26.3" cy="8.1" r="1.0" fill="none" stroke="#000" stroke-width="0.9"/><circle cx="11.6" cy="7.7" r="1.5" fill="none" stroke="#000" stroke-width="0.9"/><circle cx="18.1" cy="3.8" r="1.6" fill="none" stroke="#000" stroke-width="0.9"/><circle cx="7.6" cy="11.5" r="1.7" fill="none" stroke="#000" stroke-width="0.9"/><circle cx="25.5" cy="6.6" r="2.1" fill="none" stroke="#000" stroke-width="0.9"/><circle cx="8.5" cy="29.7" r="1.1" fill="none" stroke="#000" stroke-width="0.9"/><circle cx="24.3" cy="8.7" r="2.1" fill="none" stroke="#000" stroke-width="0.9"/><circle cx="3.7" cy="21.8" r="2.0" fill="none" stroke="#000" stroke-width="0.9"/><circle cx="16.7" cy="3.6" r="1.0" fill="none" stroke="#000" stroke-width="0.9"/><circle cx="2.4" cy="29.7" r="1.9" fill="none" stroke="#000" stroke-width="0.9"/><circle cx="12.4" cy="2.6" r="1.3" fill="none" stroke="#000" stroke-width="0.9"/><circle cx="2.0" cy="26.4" r="1.7" fill="none" stroke="#000" stroke-width="0.9"/><circle cx="2.7" cy="6.9" r="1.3" fill="none" stroke="#000" stroke-width="0.9"/><circle cx="6.8" cy="29.4" r="2.2" fill="none" stroke="#000" stroke-width="0.9"/><circle cx="9.7" cy="2.1" r="1.7" fill="none" stroke="#000" stroke-width="0.9"/><circle cx="5.8" cy="7.1" r="1.7" fill="none" stroke="#000" stroke-width="0.9"/><circle cx="5.6" cy="1.8" r="2.0" fill="none" stroke="#000" stroke-width="0.9"/><circle cx="10.9" cy="28.8" r="1.4" fill="none" stroke="#000" stroke-width="0.9"/><circle cx="13.7" cy="5.4" r="1.7" fill="none" stroke="#000" stroke-width="0.9"/><circle cx="8.0" cy="17.4" r="2.1" fill="none" stroke="#000" stroke-width="0.9"/><circle cx="14.9" cy="4.7" r="1.8" fill="none" stroke="#000" stroke-width="0.9"/><circle cx="11.8" cy="10.1" r="1.6" fill="none" stroke="#000" stroke-width="0.9"/><circle cx="16.0" cy="1.6" r="1.4" fill="none" stroke="#000" stroke-width="0.9"/><circle cx="8.0" cy="2.1" r="1.7" fill="none" stroke="#000" stroke-width="0.9"/><circle cx="3.1" cy="6.2" r="1.5" fill="none" stroke="#000" stroke-width="0.9"/><circle cx="8.9" cy="11.5" r="1.9" fill="none" stroke="#000" stroke-width="0.9"/><circle cx="2.1" cy="2.0" r="1.8" fill="none" stroke="#000" stroke-width="0.9"/><circle cx="6.3" cy="8.7" r="1.7" fill="none" stroke="#000" stroke-width="0.9"/><path d="M4,4 L12,12 M18,2 Q22,8 28,4 M3,14 Q9,16 12,12 M3,22 Q8,20 12,25" stroke="#000" stroke-width="1.300" fill="none"/><path d="M31.500,0V3M64,0V3M96.500,0V3M129,0V3M161.500,0V3M31.500,29V32M64,29V32M96.500,29V32M129,29V32M161.500,29V32" stroke="#000" stroke-width="1"/><path d="M43,7h9M43,10h9M43,13h9M75.500,7h9M75.500,10h9M75.500,13h9" stroke="#000" stroke-width="1.500"/></svg>
<svg style="left:1399.5px;top:965.6px;" width="17" height="13"><rect x="0.500" y="1" width="2" height="10" fill="#d4d4d4"/><rect x="4" y="1" width="2" height="10" fill="#d4d4d4"/><path d="M7.500,1.500 L9.500,1 L12,10.500 L10,11 Z" fill="#d4d4d4"/><polygon points="12,10 17,10 14.500,13" fill="#d4d4d4"/></svg>
<svg style="left:1427px;top:965.1px;" width="18" height="14"><path d="M0.600,11 V1 H5 L6.500,2.800 H12 V5" fill="none" stroke="#d4d4d4" stroke-width="1.200"/><ellipse cx="9.500" cy="9.500" rx="3.500" ry="3" fill="none" stroke="#d4d4d4" stroke-width="1.300"/><ellipse cx="13.500" cy="9.500" rx="3.500" ry="3" fill="none" stroke="#d4d4d4" stroke-width="1.300"/><path d="M0.600,11 H6" stroke="#d4d4d4" stroke-width="1.200"/></svg>
<svg style="left:1517px;top:966px;" width="12" height="12"><path d="M1,1L11,11M11,1L1,11" stroke="#6a6a6a" stroke-width="1.500"/></svg>
<svg style="left:1543px;top:966.5px;" width="11" height="11"><rect x="0.500" y="0.500" width="10" height="10" fill="none" stroke="#6a6a6a"/><path d="M2,3.500h1M4.500,3.500H9M2,5.500h1M4.500,5.500H9M2,7.500h1M4.500,7.500H9" stroke="#6a6a6a"/></svg>
<svg style="left:1569px;top:966.1px;" width="11" height="11"><path d="M0,0 H11 V11 H5 V5 H0 Z" fill="#d4d4d4"/><path d="M0.500,6 L4.500,10.500 V6 Z" fill="#d4d4d4"/></svg>
<svg style="left:1595px;top:965.1px;" width="12" height="13"><path d="M0.500,3 H11.500 M4,2.800 V1 H8 V2.800" fill="none" stroke="#6a6a6a" stroke-width="1.300"/><path d="M1.500,4.500 H10.500 L9.800,12.500 H2.200 Z" fill="none" stroke="#6a6a6a" stroke-width="1.200"/><path d="M4,5.500V11.500M6,5.500V11.500M8,5.500V11.500" stroke="#6a6a6a" stroke-width="0.900"/></svg>
<div style="left:1637px;top:82px;width:281px;height:17px;background:#363636;border-bottom:1px solid #2b2b2b;"></div>
<div style="left:1637px;top:82px;width:90px;height:16px;background:#434343;border-top:1px solid #505050;border-right:1px solid #2b2b2b;"></div>
<span style="left:1644.5px;top:83px;height:14px;line-height:14px;font-size:11px;color:#bdbdbd;letter-spacing:-0.29px;">Zeichenflächen</span>
<div style="left:1727px;top:82px;width:94.5px;height:16px;background:#434343;border-top:1px solid #505050;border-right:1px solid #2b2b2b;"></div>
<span style="left:1735.3px;top:83px;height:14px;line-height:14px;font-size:11px;color:#bdbdbd;letter-spacing:-0.12px;">Verknüpfungen</span>
<div style="left:1821.5px;top:82px;width:51px;height:17.5px;background:#4d4d4d;border-top:1px solid #626262;border-right:1px solid #2b2b2b;"></div>
<span style="left:1829px;top:83px;height:14px;line-height:14px;font-size:11px;color:#e4e4e4;letter-spacing:-0.37px;">Ebenen</span>
<svg style="left:1899.5px;top:86.5px;" width="15" height="9"><polygon points="0,2 5,2 2.5,5" fill="#d0d0d0"/><rect x="6" y="0.5" width="9" height="1.3" fill="#d0d0d0"/><rect x="6" y="3.5" width="9" height="1.3" fill="#d0d0d0"/><rect x="6" y="6.5" width="9" height="1.3" fill="#d0d0d0"/></svg>
<div style="left:1637px;top:99.5px;width:281px;height:204.5px;background:#4d4d4d;"></div>
<div style="left:1642px;top:105px;width:271.5px;height:178px;background:#2e2e2e;"></div>
<div style="left:1642.5px;top:105.6px;width:20.5px;height:20px;background:#5d6b82;"></div>
<div style="left:1664px;top:105.6px;width:20.5px;height:20px;background:#5d6b82;"></div>
<div style="left:1685.5px;top:105.6px;width:179px;height:20px;background:#5d6b82;"></div>
<div style="left:1865.5px;top:105.6px;width:35px;height:20px;background:#5d6b82;"></div>
<div style="left:1685.8px;top:104.6px;width:4px;height:21px;background:#3e8a1e;"></div>
<svg style="left:1644.5px;top:110.6px;" width="15" height="10"><path d="M0.500,5 Q7.500,-2.500 14.500,5 Q7.500,12 0.500,5 Z" fill="#4a4a4a" stroke="#d6d6d6" stroke-width="1.100"/><circle cx="7.500" cy="4.800" r="2.600" fill="#d6d6d6"/><circle cx="7.500" cy="4.800" r="1.100" fill="#4a4a4a"/></svg>
<svg style="left:1695px;top:113.35px;" width="8" height="5.5"><polygon points="0,0 8,0 4,5.5" fill="#e0e0e0"/></svg>
<div style="left:1712.5px;top:107.1px;width:17.5px;height:17.5px;background:#fff;border:1px solid #222;"></div>
<svg style="left:1714px;top:108.6px;" width="14.5" height="14.5"><rect x="0" y="2" width="14.500" height="8" fill="#5bbae7"/><path d="M2,10 Q4,3 9,4 Q12,5 11,10 Z" fill="#fff"/><rect x="3" y="6" width="7" height="1.500" fill="#24477a"/><rect x="3" y="8.500" width="7" height="1" fill="#3f77bc"/><rect x="0" y="0" width="14.500" height="2.500" fill="#437abe"/></svg>
<span style="left:1735.1px;top:109.1px;height:14px;line-height:14px;font-size:11px;color:#e4e4e4;letter-spacing:-0.66px;">Meine Ebene</span>
<svg style="left:1869.5px;top:111.1px;" width="10" height="10"><circle cx="5" cy="5" r="4" fill="none" stroke="#d0d0d0" stroke-width="1"/></svg>
<div style="left:1885.5px;top:113.1px;width:5.5px;height:5.5px;background:#3e8a1e;border:1px solid #1a1a1a;"></div>
<svg style="left:1893px;top:105.6px;" width="7" height="7"><polygon points="0,0 7,0 7,7" fill="#d0d0d0"/></svg>
<div style="left:1642.5px;top:126.6px;width:20.5px;height:20px;background:#5c5c5c;"></div>
<div style="left:1664px;top:126.6px;width:20.5px;height:20px;background:#5c5c5c;"></div>
<div style="left:1685.5px;top:126.6px;width:179px;height:20px;background:#5c5c5c;"></div>
<div style="left:1865.5px;top:126.6px;width:35px;height:20px;background:#5c5c5c;"></div>
<div style="left:1685.8px;top:125.6px;width:4px;height:21px;background:#3e8a1e;"></div>
<svg style="left:1644.5px;top:131.6px;" width="15" height="10"><path d="M0.500,5 Q7.500,-2.500 14.500,5 Q7.500,12 0.500,5 Z" fill="#4a4a4a" stroke="#d6d6d6" stroke-width="1.100"/><circle cx="7.500" cy="4.800" r="2.600" fill="#d6d6d6"/><circle cx="7.500" cy="4.800" r="1.100" fill="#4a4a4a"/></svg>
<div style="left:1732.5px;top:128.1px;width:17.5px;height:17.5px;background:#fff;border:1px solid #222;"></div>
<span style="left:1755.2px;top:130.1px;height:14px;line-height:14px;font-size:11px;color:#e4e4e4;letter-spacing:-0.11px;">&lt;Pfad&gt;</span>
<svg style="left:1869.5px;top:132.1px;" width="10" height="10"><circle cx="5" cy="5" r="4" fill="none" stroke="#d0d0d0" stroke-width="1"/></svg>
<div style="left:1642.5px;top:147.6px;width:20.5px;height:20px;background:#5c5c5c;"></div>
<div style="left:1664px;top:147.6px;width:20.5px;height:20px;background:#5c5c5c;"></div>
<div style="left:1685.5px;top:147.6px;width:179px;height:20px;background:#5c5c5c;"></div>
<div style="left:1865.5px;top:147.6px;width:35px;height:20px;background:#5c5c5c;"></div>
<div style="left:1685.8px;top:146.6px;width:4px;height:21px;background:#3e8a1e;"></div>
<svg style="left:1644.5px;top:152.6px;" width="15" height="10"><path d="M0.500,5 Q7.500,-2.500 14.500,5 Q7.500,12 0.500,5 Z" fill="#4a4a4a" stroke="#d6d6d6" stroke-width="1.100"/><circle cx="7.500" cy="4.800" r="2.600" fill="#d6d6d6"/><circle cx="7.500" cy="4.800" r="1.100" fill="#4a4a4a"/></svg>
<div style="left:1732.5px;top:149.1px;width:17.5px;height:17.5px;background:#fff;border:1px solid #222;"></div>
<span style="left:1755.2px;top:151.1px;height:14px;line-height:14px;font-size:11px;color:#e4e4e4;letter-spacing:-0.37px;">im 2. Stock</span>
<div style="left:1737.5px;top:157.1px;width:7px;height:1px;background:#8fb2dc;"></div>
<svg style="left:1867.5px;top:151.1px;" width="14" height="14"><circle cx="7" cy="7" r="6" fill="none" stroke="#d8d8d8" stroke-width="1"/><circle cx="7" cy="7" r="3.600" fill="none" stroke="#d8d8d8" stroke-width="1"/></svg>
<div style="left:1885px;top:154.1px;width:8px;height:8px;background:#3e8a1e;border:1px solid #1a1a1a;"></div>
<div style="left:1642.5px;top:168.6px;width:20.5px;height:20px;background:#5c5c5c;"></div>
<div style="left:1664px;top:168.6px;width:20.5px;height:20px;background:#5c5c5c;"></div>
<div style="left:1685.5px;top:168.6px;width:179px;height:20px;background:#5c5c5c;"></div>
<div style="left:1865.5px;top:168.6px;width:35px;height:20px;background:#5c5c5c;"></div>
<div style="left:1685.8px;top:167.6px;width:4px;height:21px;background:#3e8a1e;"></div>
<div style="left:1732.5px;top:170.1px;width:17.5px;height:17.5px;background:#fff;border:1px solid #222;"></div>
<span style="left:1755.2px;top:172.1px;height:14px;line-height:14px;font-size:11px;color:#e4e4e4;letter-spacing:-0.21px;">time-icon</span>
<svg style="left:1733.5px;top:171.1px;" width="15.5" height="15.5"><circle cx="7.750" cy="7.750" r="6.200" fill="#fff" stroke="#24477a" stroke-width="1.800"/><path d="M7.750,4V8.200H11" stroke="#24477a" stroke-width="1.400" fill="none"/></svg>
<svg style="left:1869.5px;top:174.1px;" width="10" height="10"><circle cx="5" cy="5" r="4" fill="none" stroke="#d0d0d0" stroke-width="1"/></svg>
<div style="left:1642.5px;top:189.6px;width:20.5px;height:20px;background:#5c5c5c;"></div>
<div style="left:1664px;top:189.6px;width:20.5px;height:20px;background:#5c5c5c;"></div>
<div style="left:1685.5px;top:189.6px;width:179px;height:20px;background:#5c5c5c;"></div>
<div style="left:1865.5px;top:189.6px;width:35px;height:20px;background:#5c5c5c;"></div>
<div style="left:1685.8px;top:188.6px;width:4px;height:21px;background:#3e8a1e;"></div>
<div style="left:1732.5px;top:191.1px;width:17.5px;height:17.5px;background:#fff;border:1px solid #222;"></div>
<span style="left:1755.2px;top:193.1px;height:14px;line-height:14px;font-size:11px;color:#e4e4e4;letter-spacing:-0.09px;">phone-4-icon</span>
<svg style="left:1733.5px;top:192.1px;" width="15.5" height="15.5"><path d="M5,1 L8,1 L9,5 L7,6.500 Q8,10 10.500,11.500 L12.500,9.500 L15,11.500 L14,15 Q9,15.500 6,11 Q3,6 5,1 Z" fill="#24477a"/><path d="M1,10 Q3,9 3,12 Q3,14.500 5.500,14" stroke="#24477a" stroke-width="1.400" fill="none"/></svg>
<svg style="left:1869.5px;top:195.1px;" width="10" height="10"><circle cx="5" cy="5" r="4" fill="none" stroke="#d0d0d0" stroke-width="1"/></svg>
<div style="left:1642.5px;top:210.6px;width:20.5px;height:20px;background:#5c5c5c;"></div>
<div style="left:1664px;top:210.6px;width:20.5px;height:20px;background:#5c5c5c;"></div>
<div style="left:1685.5px;top:210.6px;width:179px;height:20px;background:#5c5c5c;"></div>
<div style="left:1865.5px;top:210.6px;width:35px;height:20px;background:#5c5c5c;"></div>
<div style="left:1685.8px;top:209.6px;width:4px;height:21px;background:#3e8a1e;"></div>
<div style="left:1732.5px;top:212.1px;width:17.5px;height:17.5px;background:#fff;border:1px solid #222;"></div>
<span style="left:1755.2px;top:214.1px;height:14px;line-height:14px;font-size:11px;color:#e4e4e4;letter-spacing:-0.01px;">Mo    - Mi   8:...</span>
<svg style="left:1733.5px;top:213.1px;" width="15.5" height="15.5"><path d="M1,6.500h3M5,6.500h3M9,6.500h5M1,8.500h3M5,8.500h3M9,8.500h5" stroke="#6a97d0" stroke-width="1" stroke-dasharray="1.500 0.700"/></svg>
<svg style="left:1869.5px;top:216.1px;" width="10" height="10"><circle cx="5" cy="5" r="4" fill="none" stroke="#d0d0d0" stroke-width="1"/></svg>
<div style="left:1642.5px;top:231.6px;width:20.5px;height:20px;background:#5c5c5c;"></div>
<div style="left:1664px;top:231.6px;width:20.5px;height:20px;background:#5c5c5c;"></div>
<div style="left:1685.5px;top:231.6px;width:179px;height:20px;background:#5c5c5c;"></div>
<div style="left:1865.5px;top:231.6px;width:35px;height:20px;background:#5c5c5c;"></div>
<div style="left:1685.8px;top:230.6px;width:4px;height:21px;background:#3e8a1e;"></div>
<div style="left:1732.5px;top:233.1px;width:17.5px;height:17.5px;background:#fff;border:1px solid #222;"></div>
<span style="left:1755.2px;top:235.1px;height:14px;line-height:14px;font-size:11px;color:#e4e4e4;letter-spacing:0.03px;">(0123) 12 23...</span>
<svg style="left:1733.5px;top:234.1px;" width="15.5" height="15.5"><path d="M1,7.500h13" stroke="#3f77bc" stroke-width="2.200" stroke-dasharray="2.500 0.600"/></svg>
<svg style="left:1869.5px;top:237.1px;" width="10" height="10"><circle cx="5" cy="5" r="4" fill="none" stroke="#d0d0d0" stroke-width="1"/></svg>
<div style="left:1642.5px;top:252.6px;width:20.5px;height:20px;background:#5c5c5c;"></div>
<div style="left:1664px;top:252.6px;width:20.5px;height:20px;background:#5c5c5c;"></div>
<div style="left:1685.5px;top:252.6px;width:179px;height:20px;background:#5c5c5c;"></div>
<div style="left:1865.5px;top:252.6px;width:35px;height:20px;background:#5c5c5c;"></div>
<div style="left:1685.8px;top:251.6px;width:4px;height:21px;background:#3e8a1e;"></div>
<svg style="left:1644.5px;top:257.6px;" width="15" height="10"><path d="M0.500,5 Q7.500,-2.500 14.500,5 Q7.500,12 0.500,5 Z" fill="#4a4a4a" stroke="#d6d6d6" stroke-width="1.100"/><circle cx="7.500" cy="4.800" r="2.600" fill="#d6d6d6"/><circle cx="7.500" cy="4.800" r="1.100" fill="#4a4a4a"/></svg>
<div style="left:1732.5px;top:254.1px;width:17.5px;height:17.5px;background:#fff;border:1px solid #222;"></div>
<span style="left:1755.2px;top:256.1px;height:14px;line-height:14px;font-size:11px;color:#e4e4e4;letter-spacing:-0.32px;">Praxis für Ort...</span>
<svg style="left:1733.5px;top:255.1px;" width="15.5" height="15.5"><path d="M4,4.500h8" stroke="#3f77bc" stroke-width="1"/><path d="M2.500,6.800h11" stroke="#24477a" stroke-width="1.600"/><path d="M2.500,9.300h11" stroke="#3f77bc" stroke-width="1.200"/><path d="M2.500,11.200h11" stroke="#3f77bc" stroke-width="0.600"/></svg>
<svg style="left:1869.5px;top:258.1px;" width="10" height="10"><circle cx="5" cy="5" r="4" fill="none" stroke="#d0d0d0" stroke-width="1"/></svg>
<div style="left:1642.5px;top:273.6px;width:20.5px;height:9.4px;background:#5c5c5c;"></div>
<div style="left:1664px;top:273.6px;width:20.5px;height:9.4px;background:#5c5c5c;"></div>
<div style="left:1685.5px;top:273.6px;width:179px;height:9.4px;background:#5c5c5c;"></div>
<div style="left:1865.5px;top:273.6px;width:35px;height:9.4px;background:#5c5c5c;"></div>
<div style="left:1685.8px;top:272.6px;width:4px;height:10.4px;background:#3e8a1e;"></div>
<svg style="left:1644px;top:278.6px;" width="15" height="5"><path d="M0.500,5 Q7.500,-2.500 14.500,5" fill="none" stroke="#d6d6d6" stroke-width="1.100"/></svg>
<div style="left:1732.5px;top:275.6px;width:17px;height:7.4px;background:#fff;border:1px solid #222;border-bottom:none;"></div>
<div style="left:1901px;top:105px;width:12.5px;height:178px;background:#3a3a3a;"></div>
<svg style="left:1903.5px;top:111.25px;" width="7" height="4.5"><polygon points="0,4.5 7,4.5 3.5,0" fill="#d8d8d8"/></svg>
<svg style="left:1903.5px;top:273.75px;" width="7" height="4.5"><polygon points="0,0 7,0 3.5,4.5" fill="#d8d8d8"/></svg>
<div style="left:1901.5px;top:122.5px;width:11px;height:110.5px;background:#8a8a8a;"></div>
<span style="left:1642.3px;top:287.3px;height:14px;line-height:14px;font-size:11px;color:#e4e4e4;letter-spacing:-0.49px;">2 Ebenen</span>
<svg style="left:1775px;top:287.5px;" width="13" height="13"><circle cx="8" cy="5" r="3.800" fill="none" stroke="#d4d4d4" stroke-width="1.300"/><line x1="5.500" y1="7.500" x2="1" y2="12" stroke="#d4d4d4" stroke-width="1.500"/></svg>
<svg style="left:1801px;top:288.5px;" width="12" height="12"><rect x="0.600" y="0.600" width="7.500" height="7.500" fill="none" stroke="#d4d4d4" stroke-width="1.200"/><rect x="3.600" y="3.600" width="7.500" height="7.500" fill="#777" stroke="#999" stroke-width="1"/></svg>
<svg style="left:1826px;top:288px;" width="15" height="12"><path d="M5,3 H15 V11 H9 V7 H5 Z" fill="#d4d4d4"/><path d="M0,1.500H4V5.500M4,5.500L2,3.500M4,5.500L6,3.500" fill="none" stroke="#d4d4d4" stroke-width="1.200"/></svg>
<svg style="left:1854px;top:288.8px;" width="11" height="11"><path d="M0,0 H11 V11 H5 V5 H0 Z" fill="#d4d4d4"/><path d="M0.500,6 L4.500,10.500 V6 Z" fill="#d4d4d4"/></svg>
<svg style="left:1879px;top:287.8px;" width="12" height="13"><path d="M0.500,3 H11.500 M4,2.800 V1 H8 V2.800" fill="none" stroke="#d4d4d4" stroke-width="1.300"/><path d="M1.500,4.500 H10.500 L9.800,12.500 H2.200 Z" fill="none" stroke="#d4d4d4" stroke-width="1.200"/><path d="M4,5.500V11.500M6,5.500V11.500M8,5.500V11.500" stroke="#d4d4d4" stroke-width="0.900"/></svg>
<svg style="left:1908px;top:294px;" width="9" height="9"><path d="M8,0v1M6,2v1M8,2v1M4,4v1M6,4v1M8,4v1M2,6v1M4,6v1M6,6v1M8,6v1M0,8v1M2,8v1M4,8v1M6,8v1M8,8v1" stroke="#2a2a2a" stroke-width="1"/></svg>
<div style="left:1637px;top:307px;width:281px;height:17px;background:#363636;border-bottom:1px solid #2b2b2b;"></div>
<div style="left:1637px;top:307px;width:66.5px;height:17.5px;background:#4d4d4d;border-top:1px solid #626262;border-right:1px solid #2b2b2b;"></div>
<span style="left:1644.5px;top:308px;height:14px;line-height:14px;font-size:11px;color:#e4e4e4;letter-spacing:-0.08px;">Farbfelder</span>
<svg style="left:1899.5px;top:311.5px;" width="15" height="9"><polygon points="0,2 5,2 2.5,5" fill="#d0d0d0"/><rect x="6" y="0.5" width="9" height="1.3" fill="#d0d0d0"/><rect x="6" y="3.5" width="9" height="1.3" fill="#d0d0d0"/><rect x="6" y="6.5" width="9" height="1.3" fill="#d0d0d0"/></svg>
<div style="left:1637px;top:324.5px;width:281px;height:106.5px;background:#4d4d4d;"></div>
<div style="left:1652.7px;top:340.4px;width:19px;height:19px;background:#fff;border:1px solid #222;"></div>
<div style="left:1658.5px;top:346px;width:7.5px;height:7.5px;background:#4d4d4d;"></div>
<svg style="left:1652.7px;top:340.4px;" width="19" height="19"><line x1="1" y1="18" x2="18" y2="1" stroke="#d9431e" stroke-width="2"/></svg>
<div style="left:1642.7px;top:330.9px;width:19px;height:18.5px;background:#3f7cc5;border:1px solid #f0f0f0;box-shadow:0 0 0 0.500px #222;"></div>
<div style="left:1861.5px;top:331.5px;width:50px;height:21px;background:#5f5f5f;border:1px solid #2b2b2b;"></div>
<div style="left:1886.5px;top:332.5px;width:24px;height:19px;background:#363636;"></div>
<svg style="left:1868px;top:336px;" width="13" height="13"><path d="M0,1.500H12M0,5H12M0,8.500H12M0,12H12" stroke="#e4e4e4" stroke-width="1.800"/></svg>
<svg style="left:1892px;top:335px;" width="14" height="14"><rect x="0" y="0" width="3.400" height="3.400" fill="#e4e4e4"/><rect x="0" y="5" width="3.400" height="3.400" fill="#e4e4e4"/><rect x="0" y="10" width="3.400" height="3.400" fill="#e4e4e4"/><rect x="5" y="0" width="3.400" height="3.400" fill="#e4e4e4"/><rect x="5" y="5" width="3.400" height="3.400" fill="#e4e4e4"/><rect x="5" y="10" width="3.400" height="3.400" fill="#e4e4e4"/><rect x="10" y="0" width="3.400" height="3.400" fill="#e4e4e4"/><rect x="10" y="5" width="3.400" height="3.400" fill="#e4e4e4"/><rect x="10" y="10" width="3.400" height="3.400" fill="#e4e4e4"/></svg>
<div style="left:1642px;top:365px;width:259px;height:47px;background:#4d4d4d;border:1px solid #2e2e2e;"></div>
<div style="left:1901px;top:365px;width:12.5px;height:47px;background:#3f3f3f;"></div>
<svg style="left:1903.5px;top:371px;" width="7" height="4"><polygon points="0,4 7,4 3.5,0" fill="#8a8a8a"/></svg>
<svg style="left:1903.5px;top:402px;" width="7" height="4"><polygon points="0,0 7,0 3.5,4" fill="#8a8a8a"/></svg>
<div style="left:1643px;top:366.3px;width:13px;height:12.5px;background:#fff;"></div>
<svg style="left:1643px;top:366.3px;" width="13" height="12.5"><line x1="0" y1="12.500" x2="13" y2="0" stroke="#d9431e" stroke-width="2"/></svg>
<div style="left:1657px;top:366.3px;width:13px;height:12.5px;background:#fff;"></div>
<svg style="left:1657px;top:366.3px;" width="13" height="12.5"><circle cx="6.500" cy="6.250" r="3.800" fill="none" stroke="#111" stroke-width="1"/><circle cx="6.500" cy="6.250" r="1.500" fill="none" stroke="#111" stroke-width="0.800"/><path d="M6.500,0V12.500M0,6.250H13" stroke="#111" stroke-width="0.800"/></svg>
<div style="left:1671px;top:366.3px;width:13px;height:12.5px;background:#fff;"></div>
<div style="left:1685px;top:366.3px;width:13px;height:12.5px;background:#000;"></div>
<div style="left:1699px;top:366.3px;width:13px;height:12.5px;background:#fff;"></div>
<svg style="left:1699px;top:366.3px;" width="13" height="12.5"><path d="M1.500,1.500H11.500V8L8,11H1.500Z" fill="#3f7cc5" stroke="#111" stroke-width="1.200"/></svg>
<div style="left:1713px;top:366.3px;width:13px;height:12.5px;background:#25558e;"></div>
<svg style="left:1713px;top:366.3px;" width="13" height="12.5"><polygon points="13,4 13,12.500 4,12.500" fill="#fff"/><line x1="4" y1="12.500" x2="13" y2="4" stroke="#000" stroke-width="1.400"/></svg>
<div style="left:1727px;top:366.3px;width:13px;height:12.5px;background:#5bbae7;"></div>
<svg style="left:1727px;top:366.3px;" width="13" height="12.5"><polygon points="13,4 13,12.500 4,12.500" fill="#fff"/><line x1="4" y1="12.500" x2="13" y2="4" stroke="#000" stroke-width="1.400"/></svg>
<div style="left:1741px;top:366.3px;width:13px;height:12.5px;background:#a9d8f4;"></div>
<svg style="left:1741px;top:366.3px;" width="13" height="12.5"><polygon points="13,4 13,12.500 4,12.500" fill="#fff"/><line x1="4" y1="12.500" x2="13" y2="4" stroke="#000" stroke-width="1.400"/></svg>
<div style="left:1755px;top:366.3px;width:13px;height:12.5px;background:#e8e870;"></div>
<svg style="left:1755px;top:366.3px;" width="13" height="12.5"><polygon points="13,4 13,12.500 4,12.500" fill="#fff"/><line x1="4" y1="12.500" x2="13" y2="4" stroke="#000" stroke-width="1.400"/></svg>
<svg style="left:1645px;top:415.7px;" width="17" height="13"><rect x="0.500" y="1" width="2" height="10" fill="#d4d4d4"/><rect x="4" y="1" width="2" height="10" fill="#d4d4d4"/><path d="M7.500,1.500 L9.500,1 L12,10.500 L10,11 Z" fill="#d4d4d4"/><polygon points="12,10 17,10 14.500,13" fill="#d4d4d4"/></svg>
<svg style="left:1676px;top:416px;" width="11" height="12"><circle cx="8.500" cy="2" r="1.800" fill="#d4d4d4"/><circle cx="2.500" cy="6" r="2" fill="none" stroke="#d4d4d4" stroke-width="1.200"/><circle cx="8.500" cy="10" r="1.800" fill="#d4d4d4"/><path d="M8,2.500L3.500,5.500M3.500,6.500L8,9.500" stroke="#d4d4d4" stroke-width="1.200"/></svg>
<svg style="left:1699px;top:415.2px;" width="18" height="14"><path d="M0.600,11 V1 H5 L6.500,2.800 H12 V5" fill="none" stroke="#d4d4d4" stroke-width="1.200"/><ellipse cx="9.500" cy="9.500" rx="3.500" ry="3" fill="none" stroke="#d4d4d4" stroke-width="1.300"/><ellipse cx="13.500" cy="9.500" rx="3.500" ry="3" fill="none" stroke="#d4d4d4" stroke-width="1.300"/><path d="M0.600,11 H6" stroke="#d4d4d4" stroke-width="1.200"/></svg>
<svg style="left:1773px;top:416px;" width="18" height="13"><g fill="#d4d4d4"><rect x="0" y="0" width="2.800" height="2.800"/><rect x="0" y="3.8" width="2.800" height="2.800"/><rect x="0" y="7.6" width="2.800" height="2.800"/><rect x="3.8" y="0" width="2.800" height="2.800"/><rect x="3.8" y="3.8" width="2.800" height="2.800"/><rect x="3.8" y="7.6" width="2.800" height="2.800"/><rect x="7.6" y="0" width="2.800" height="2.800"/><rect x="7.6" y="3.8" width="2.800" height="2.800"/><rect x="7.6" y="7.6" width="2.800" height="2.800"/><polygon points="12,9.500 17,9.500 14.500,12.500"/></g></svg>
<svg style="left:1801px;top:416.5px;" width="11" height="11"><rect x="0.500" y="0.500" width="10" height="10" fill="none" stroke="#d4d4d4"/><path d="M2,3.500h1M4.500,3.500H9M2,5.500h1M4.500,5.500H9M2,7.500h1M4.500,7.500H9" stroke="#d4d4d4"/></svg>
<svg style="left:1826px;top:416.5px;" width="14" height="11"><path d="M0.500,10.500V0.500H5L6.500,2.500H13.500V10.500Z" fill="#d4d4d4"/></svg>
<svg style="left:1854px;top:416.2px;" width="11" height="11"><path d="M0,0 H11 V11 H5 V5 H0 Z" fill="#d4d4d4"/><path d="M0.500,6 L4.500,10.500 V6 Z" fill="#d4d4d4"/></svg>
<svg style="left:1879px;top:415.2px;" width="12" height="13"><path d="M0.500,3 H11.500 M4,2.800 V1 H8 V2.800" fill="none" stroke="#d4d4d4" stroke-width="1.300"/><path d="M1.500,4.500 H10.500 L9.800,12.500 H2.200 Z" fill="none" stroke="#d4d4d4" stroke-width="1.200"/><path d="M4,5.500V11.500M6,5.500V11.500M8,5.500V11.500" stroke="#d4d4d4" stroke-width="0.900"/></svg>
<svg style="left:1908px;top:421px;" width="9" height="9"><path d="M8,0v1M6,2v1M8,2v1M4,4v1M6,4v1M8,4v1M2,6v1M4,6v1M6,6v1M8,6v1M0,8v1M2,8v1M4,8v1M6,8v1M8,8v1" stroke="#2a2a2a" stroke-width="1"/></svg>
<div style="left:1637px;top:434px;width:281px;height:17px;background:#363636;border-bottom:1px solid #2b2b2b;"></div>
<div style="left:1637px;top:434px;width:54px;height:17.5px;background:#4d4d4d;border-top:1px solid #626262;border-right:1px solid #2b2b2b;"></div>
<svg style="left:1642px;top:437.5px;" width="7" height="10"><path d="M0.800,3.800 L3.300,1 L5.800,3.800 M0.800,6.200 L3.300,9 L5.800,6.200" fill="none" stroke="#d0d0d0" stroke-width="1.200"/></svg>
<span style="left:1650.5px;top:435px;height:14px;line-height:14px;font-size:11px;color:#e4e4e4;letter-spacing:-0.34px;">Kontur</span>
<div style="left:1691px;top:434px;width:66.5px;height:16px;background:#434343;border-top:1px solid #505050;border-right:1px solid #2b2b2b;"></div>
<span style="left:1698px;top:435px;height:14px;line-height:14px;font-size:11px;color:#bdbdbd;letter-spacing:-0.07px;">Grafikstile</span>
<svg style="left:1899.5px;top:438.5px;" width="15" height="9"><polygon points="0,2 5,2 2.5,5" fill="#d0d0d0"/><rect x="6" y="0.5" width="9" height="1.3" fill="#d0d0d0"/><rect x="6" y="3.5" width="9" height="1.3" fill="#d0d0d0"/><rect x="6" y="6.5" width="9" height="1.3" fill="#d0d0d0"/></svg>
<div style="left:1637px;top:451.5px;width:281px;height:185px;background:#4d4d4d;"></div>
<span style="left:1665.7px;top:461px;height:14px;line-height:14px;font-size:11px;color:#e4e4e4;letter-spacing:-0.61px;">Stärke:</span>
<div style="left:1703.5px;top:458.5px;width:17.5px;height:18px;background:#5c5c5c;border:1px solid #2b2b2b;background:linear-gradient(#666,#555);"></div>
<div style="left:1704.5px;top:467px;width:15.5px;height:1px;background:#3a3a3a;"></div>
<svg style="left:1709.25px;top:462.11px;" width="6" height="3.5"><polygon points="0,3.5 6,3.5 3,0" fill="#e0e0e0"/></svg>
<svg style="left:1709.25px;top:470.39px;" width="6" height="3.5"><polygon points="0,0 6,0 3,3.5" fill="#e0e0e0"/></svg>
<div style="left:1721px;top:458.5px;width:60.5px;height:18px;background:#a9a9a9;border:1px solid #2b2b2b;"></div>
<div style="left:1781.5px;top:458.5px;width:15px;height:18px;background:#5c5c5c;border:1px solid #2b2b2b;background:linear-gradient(#666,#555);"></div>
<svg style="left:1785.5px;top:466px;" width="7" height="4"><polygon points="0,0 7,0 3.5,4" fill="#e0e0e0"/></svg>
<span style="left:1646.7px;top:487.2px;height:14px;line-height:14px;font-size:11px;color:#858585;letter-spacing:-0.73px;">Abschluss:</span>
<div style="left:1703.5px;top:485px;width:69px;height:18.5px;background:#585858;border:1px solid #333;"></div>
<div style="left:1726.5px;top:486px;width:1px;height:16.5px;background:#333;"></div>
<div style="left:1749.5px;top:486px;width:1px;height:16.5px;background:#333;"></div>
<svg style="left:1707.5px;top:487.5px;" width="16" height="14"><path d="M6,3H13V11H6Z" fill="#8a8a8a"/><path d="M2,7H9" stroke="#444" stroke-width="1"/><rect x="5" y="6" width="2" height="2" fill="#444"/></svg>
<svg style="left:1730.5px;top:487.5px;" width="16" height="14"><path d="M7,3H13V11H7A4,4 0 0 1 7,3Z" fill="#8a8a8a"/><path d="M7,7H13" stroke="#444" stroke-width="1"/></svg>
<svg style="left:1753.5px;top:487.5px;" width="16" height="14"><path d="M3,3H13V11H3Z" fill="#8a8a8a"/><path d="M7,7H13" stroke="#444" stroke-width="1"/><rect x="6" y="6" width="2" height="2" fill="#444"/></svg>
<span style="left:1673.7px;top:514.5px;height:14px;line-height:14px;font-size:11px;color:#858585;letter-spacing:-0.87px;">Ecke:</span>
<div style="left:1703.5px;top:512px;width:69px;height:18.5px;background:#585858;border:1px solid #333;"></div>
<div style="left:1726.5px;top:513px;width:1px;height:16.5px;background:#333;"></div>
<div style="left:1749.5px;top:513px;width:1px;height:16.5px;background:#333;"></div>
<svg style="left:1707.5px;top:513.5px;" width="16" height="16"><path d="M3,13V3H13V8H8V13Z" fill="#8a8a8a"/><path d="M5.500,13V5.500H13" stroke="#444" fill="none"/></svg>
<svg style="left:1730.5px;top:513.5px;" width="16" height="16"><path d="M3,13V8A5,5 0 0 1 8,3H13V8H8V13Z" fill="#8a8a8a"/><path d="M5.500,13V5.500H13" stroke="#444" fill="none"/></svg>
<svg style="left:1753.5px;top:513.5px;" width="16" height="16"><path d="M3,13V6L6,3H13V8H8V13Z" fill="#8a8a8a"/><path d="M5.500,13V5.500H13" stroke="#444" fill="none"/></svg>
<span style="left:1788.7px;top:514.5px;height:14px;line-height:14px;font-size:11px;color:#858585;letter-spacing:-0.52px;">Max.:</span>
<div style="left:1819.5px;top:512.5px;width:41.5px;height:17.5px;background:#6e6e6e;border:1px solid #2b2b2b;"></div>
<span style="left:1866px;top:515px;height:14px;line-height:14px;font-size:11px;color:#858585;">x</span>
<span style="left:1642.7px;top:541.3px;height:14px;line-height:14px;font-size:11px;color:#858585;letter-spacing:-0.38px;">Kont. ausr.:</span>
<div style="left:1703.5px;top:539px;width:69px;height:18.5px;background:#585858;border:1px solid #333;"></div>
<div style="left:1726.5px;top:540px;width:1px;height:16.5px;background:#333;"></div>
<div style="left:1749.5px;top:540px;width:1px;height:16.5px;background:#333;"></div>
<svg style="left:1707.5px;top:541px;" width="16" height="15"><path d="M4,2V12H14" stroke="#8a8a8a" stroke-width="2.400" fill="none"/><path d="M4,2V12H14" stroke="#444" stroke-width="0.800" fill="none"/></svg>
<svg style="left:1730.5px;top:541px;" width="16" height="15"><path d="M5,2V11H14" stroke="#8a8a8a" stroke-width="2.400" fill="none"/><path d="M4,2V12H14" stroke="#444" stroke-width="0.800" fill="none"/></svg>
<svg style="left:1753.5px;top:541px;" width="16" height="15"><path d="M3.500,2V12.500H14" stroke="#8a8a8a" stroke-width="2.600" fill="none"/><path d="M5,2V11H14" stroke="#444" stroke-width="0.800" fill="none"/></svg>
<div style="left:1643px;top:565px;width:229px;height:1px;background:#3a3a3a;"></div>
<div style="left:1643px;top:566px;width:229px;height:1px;background:#555;"></div>
<div style="left:1643.5px;top:577px;width:11.5px;height:11px;background:#5a5a5a;border:1px solid #2b2b2b;"></div>
<div style="left:1646px;top:581.5px;width:6.5px;height:1.8px;background:#eee;"></div>
<span style="left:1659.1px;top:575.3px;height:14px;line-height:14px;font-size:11px;color:#e4e4e4;letter-spacing:-0.49px;">Gestrichelte Linie</span>
<div style="left:1792.5px;top:572.5px;width:78px;height:19px;background:#585858;border:1px solid #333;"></div>
<div style="left:1831px;top:573.5px;width:1px;height:17px;background:#333;"></div>
<svg style="left:1797px;top:576px;" width="30" height="12"><path d="M1,4V1H8M12,1H20M24,1H27M1,11H8M12,11H20M24,11H29V8" stroke="#8a8a8a" stroke-width="1.600" fill="none"/><path d="M27,2V7" stroke="#8a8a8a" stroke-width="1.200"/></svg>
<svg style="left:1836px;top:576px;" width="30" height="12"><path d="M1,4V1H6M11,1H19M24,1H29V4M1,8V11H6M11,11H19M24,11H29V8" stroke="#8a8a8a" stroke-width="1.600" fill="none"/></svg>
<div style="left:1643.5px;top:600px;width:35px;height:17.5px;background:#6e6e6e;border:1px solid #2b2b2b;"></div>
<span style="left:1647.5px;top:619px;height:14px;line-height:14px;font-size:11px;color:#858585;letter-spacing:-0.7px;">Strich</span>
<div style="left:1681.5px;top:600px;width:35px;height:17.5px;background:#6e6e6e;border:1px solid #2b2b2b;"></div>
<span style="left:1685px;top:619px;height:14px;line-height:14px;font-size:11px;color:#858585;letter-spacing:-0.76px;">Lücke</span>
<div style="left:1719.5px;top:600px;width:35px;height:17.5px;background:#6e6e6e;border:1px solid #2b2b2b;"></div>
<span style="left:1723.5px;top:619px;height:14px;line-height:14px;font-size:11px;color:#858585;letter-spacing:-0.7px;">Strich</span>
<div style="left:1757.5px;top:600px;width:35px;height:17.5px;background:#6e6e6e;border:1px solid #2b2b2b;"></div>
<span style="left:1761px;top:619px;height:14px;line-height:14px;font-size:11px;color:#858585;letter-spacing:-0.76px;">Lücke</span>
<div style="left:1795.5px;top:600px;width:35px;height:17.5px;background:#6e6e6e;border:1px solid #2b2b2b;"></div>
<span style="left:1799.5px;top:619px;height:14px;line-height:14px;font-size:11px;color:#858585;letter-spacing:-0.7px;">Strich</span>
<div style="left:1833.5px;top:600px;width:35px;height:17.5px;background:#6e6e6e;border:1px solid #2b2b2b;"></div>
<span style="left:1837px;top:619px;height:14px;line-height:14px;font-size:11px;color:#858585;letter-spacing:-0.76px;">Lücke</span>
<div style="left:1637px;top:640px;width:281px;height:17px;background:#363636;border-bottom:1px solid #2b2b2b;"></div>
<div style="left:1637px;top:640px;width:48px;height:17.5px;background:#4d4d4d;border-top:1px solid #626262;border-right:1px solid #2b2b2b;"></div>
<svg style="left:1642px;top:643.5px;" width="7" height="10"><path d="M0.800,3.800 L3.300,1 L5.800,3.800 M0.800,6.200 L3.300,9 L5.800,6.200" fill="none" stroke="#d0d0d0" stroke-width="1.200"/></svg>
<span style="left:1650.5px;top:641px;height:14px;line-height:14px;font-size:11px;color:#e4e4e4;letter-spacing:-0.39px;">Farbe</span>
<div style="left:1685px;top:640px;width:78.5px;height:16px;background:#434343;border-top:1px solid #505050;border-right:1px solid #2b2b2b;"></div>
<span style="left:1692px;top:641px;height:14px;line-height:14px;font-size:11px;color:#bdbdbd;letter-spacing:0.02px;">Transparenz</span>
<div style="left:1763.5px;top:640px;width:51px;height:16px;background:#434343;border-top:1px solid #505050;border-right:1px solid #2b2b2b;"></div>
<span style="left:1771px;top:641px;height:14px;line-height:14px;font-size:11px;color:#bdbdbd;letter-spacing:0.12px;">Verlauf</span>
<svg style="left:1899.5px;top:644.5px;" width="15" height="9"><polygon points="0,2 5,2 2.5,5" fill="#d0d0d0"/><rect x="6" y="0.5" width="9" height="1.3" fill="#d0d0d0"/><rect x="6" y="3.5" width="9" height="1.3" fill="#d0d0d0"/><rect x="6" y="6.5" width="9" height="1.3" fill="#d0d0d0"/></svg>
<div style="left:1637px;top:657.5px;width:281px;height:166.5px;background:#4d4d4d;"></div>
<svg style="left:1642px;top:663.5px;" width="13" height="13"><rect x="4.500" y="4.500" width="7" height="7" fill="#4c4c4c" stroke="#eee" stroke-width="1"/><rect x="6.500" y="6.500" width="3" height="3" fill="#111"/><rect x="0.500" y="0.500" width="7" height="7" fill="#eee" stroke="#111" stroke-width="1"/></svg>
<svg style="left:1661px;top:663.5px;" width="12" height="12"><path d="M3.500,3 H8.500 V8" fill="none" stroke="#d8d8d8" stroke-width="1.200"/><polygon points="1,3 4.500,0.500 4.500,5.500" fill="#d8d8d8"/><polygon points="8.500,11 6,7.500 11,7.500" fill="#d8d8d8"/></svg>
<div style="left:1652.3px;top:691.5px;width:19.5px;height:19px;background:#fff;border:1px solid #222;"></div>
<div style="left:1658.5px;top:697.5px;width:7.5px;height:7.5px;background:#4d4d4d;"></div>
<svg style="left:1652.3px;top:691.5px;" width="19.5" height="19"><line x1="1" y1="18" x2="18.500" y2="1" stroke="#d9431e" stroke-width="2"/></svg>
<div style="left:1642.7px;top:681.8px;width:19px;height:18.5px;background:#3f7cc5;border:1px solid #f0f0f0;box-shadow:0 0 0 0.500px #222;"></div>
<span style="left:1689.8px;top:669px;height:14px;line-height:14px;font-size:11px;color:#e4e4e4;">T</span>
<div style="left:1707.5px;top:672.6px;width:112.5px;height:5px;background:#fff;background:linear-gradient(90deg,#fff,#3f6fb8);border-radius:1px;"></div>
<svg style="left:1815.5px;top:677.5px;" width="8" height="7"><polygon points="4,0 8,7 0,7" fill="#d8d8d8"/></svg>
<div style="left:1826.5px;top:667px;width:33px;height:17px;background:#a9a9a9;border:1px solid #2b2b2b;"></div>
<span style="left:1831.5px;top:668.2px;height:14px;line-height:14px;font-size:11px;color:#000;font-weight:normal;letter-spacing:-0.12px;">100</span>
<span style="left:1862px;top:669px;height:14px;line-height:14px;font-size:11px;color:#e4e4e4;">%</span>
<span style="left:1702px;top:687px;height:14px;line-height:14px;font-size:11px;color:#e4e4e4;letter-spacing:-0.46px;">himmelblau</span>
<div style="left:1826.2px;top:688.3px;width:11px;height:11px;background:#7a7a7a;border:1px solid #b0b0b0;"></div>
<svg style="left:1849px;top:688px;" width="12" height="12"><rect x="0.500" y="0.500" width="11" height="11" fill="#fff" stroke="#ddd"/><polygon points="1,1 11,1 6,6" fill="#e63cc8"/><polygon points="1,1 6,6 1,11" fill="#22b8e6"/><polygon points="11,1 11,11 6,6" fill="#f2e030"/><polygon points="1,11 11,11 6,6" fill="#111"/></svg>
<div style="left:1642.7px;top:772px;width:13px;height:12px;background:#fff;"></div>
<svg style="left:1642.7px;top:772px;" width="13" height="12"><line x1="0" y1="12" x2="13" y2="0" stroke="#d9431e" stroke-width="2"/></svg>
<div style="left:1655.7px;top:772px;width:13px;height:12px;background:#000;"></div>
<div style="left:1668.7px;top:772px;width:13px;height:12px;background:#fff;"></div>
<div style="left:1643.5px;top:795.5px;width:257.5px;height:21.5px;background:#fff;border:1px solid #2b2b2b;background:linear-gradient(90deg,#fff 3%,#a9bbe6 45%,#3f7cc5 95%);"></div>
<svg style="left:1908px;top:813px;" width="9" height="9"><path d="M8,0v1M6,2v1M8,2v1M4,4v1M6,4v1M8,4v1M2,6v1M4,6v1M6,6v1M8,6v1M0,8v1M2,8v1M4,8v1M6,8v1M8,8v1" stroke="#2a2a2a" stroke-width="1"/></svg>
<div style="left:1637px;top:827px;width:281px;height:17px;background:#363636;border-bottom:1px solid #2b2b2b;"></div>
<div style="left:1637px;top:827px;width:93px;height:17.5px;background:#4d4d4d;border-top:1px solid #626262;border-right:1px solid #2b2b2b;"></div>
<span style="left:1644px;top:828px;height:14px;line-height:14px;font-size:11px;color:#e4e4e4;letter-spacing:-0.1px;">Zeichenformate</span>
<div style="left:1730px;top:827px;width:89px;height:16px;background:#434343;border-top:1px solid #505050;border-right:1px solid #2b2b2b;"></div>
<span style="left:1737px;top:828px;height:14px;line-height:14px;font-size:11px;color:#bdbdbd;letter-spacing:-0.03px;">Absatzformate</span>
<svg style="left:1899.5px;top:831.5px;" width="15" height="9"><polygon points="0,2 5,2 2.5,5" fill="#d0d0d0"/><rect x="6" y="0.5" width="9" height="1.3" fill="#d0d0d0"/><rect x="6" y="3.5" width="9" height="1.3" fill="#d0d0d0"/><rect x="6" y="6.5" width="9" height="1.3" fill="#d0d0d0"/></svg>
<div style="left:1637px;top:844.5px;width:281px;height:137.5px;background:#4d4d4d;"></div>
<div style="left:1642px;top:850px;width:271.5px;height:112px;background:#4a4a4a;border:1px solid #2e2e2e;"></div>
<div style="left:1643px;top:851px;width:269.5px;height:20.5px;background:#5d6b82;"></div>
<span style="left:1648.5px;top:854.5px;height:14px;line-height:14px;font-size:11px;color:#f0f0f0;font-weight:normal;letter-spacing:0px;">[Normales Zeichenformat]+</span>
<svg style="left:1854px;top:966.2px;" width="11" height="11"><path d="M0,0 H11 V11 H5 V5 H0 Z" fill="#d4d4d4"/><path d="M0.500,6 L4.500,10.500 V6 Z" fill="#d4d4d4"/></svg>
<svg style="left:1879.5px;top:965.2px;" width="12" height="13"><path d="M0.500,3 H11.500 M4,2.800 V1 H8 V2.800" fill="none" stroke="#6a6a6a" stroke-width="1.300"/><path d="M1.500,4.500 H10.500 L9.800,12.500 H2.200 Z" fill="none" stroke="#6a6a6a" stroke-width="1.200"/><path d="M4,5.500V11.500M6,5.500V11.500M8,5.500V11.500" stroke="#6a6a6a" stroke-width="0.900"/></svg>
<div style="left:107.5px;top:584.5px;width:243.5px;height:328px;background:#2b2b2b;border-radius:4px 4px 0 0;box-shadow:0 1px 4px rgba(0,0,0,0.450);"></div>
<div style="left:108.5px;top:585.5px;width:241.5px;height:13px;background:#343434;border-radius:3px 3px 0 0;"></div>
<svg style="left:113.5px;top:589px;" width="8" height="7"><path d="M0.800,0.500L6.800,6.500M6.800,0.500L0.800,6.500" stroke="#e0e0e0" stroke-width="1.500"/></svg>
<svg style="left:336.5px;top:589px;" width="8" height="7"><polygon points="3.500,0 3.500,7 0,3.500" fill="#d0d0d0"/><polygon points="7.500,0 7.500,7 4,3.500" fill="#d0d0d0"/></svg>
<div style="left:108.5px;top:598.5px;width:241.5px;height:17px;background:#363636;border-bottom:1px solid #2b2b2b;"></div>
<div style="left:108.5px;top:598.5px;width:100px;height:17.5px;background:#4d4d4d;border-top:1px solid #626262;border-right:1px solid #2b2b2b;"></div>
<svg style="left:113.5px;top:602px;" width="7" height="10"><path d="M0.800,3.800 L3.300,1 L5.800,3.800 M0.800,6.200 L3.300,9 L5.800,6.200" fill="none" stroke="#d0d0d0" stroke-width="1.200"/></svg>
<span style="left:122.3px;top:599.5px;height:14px;line-height:14px;font-size:11px;color:#e4e4e4;letter-spacing:-0.01px;">Transformieren</span>
<div style="left:208.5px;top:598.5px;width:66px;height:16px;background:#434343;border-top:1px solid #505050;border-right:1px solid #2b2b2b;"></div>
<span style="left:215.3px;top:599.5px;height:14px;line-height:14px;font-size:11px;color:#bdbdbd;letter-spacing:-0.14px;">Pathfinder</span>
<svg style="left:331.5px;top:603px;" width="15" height="9"><polygon points="0,2 5,2 2.5,5" fill="#d0d0d0"/><rect x="6" y="0.5" width="9" height="1.3" fill="#d0d0d0"/><rect x="6" y="3.5" width="9" height="1.3" fill="#d0d0d0"/><rect x="6" y="6.5" width="9" height="1.3" fill="#d0d0d0"/></svg>
<div style="left:108.5px;top:616px;width:241.5px;height:295.5px;background:#4a4a4a;"></div>
<svg style="left:114px;top:635.8px;" width="20" height="20"><rect x="0.7" y="0.7" width="3.600" height="3.600" fill="none" stroke="#e0e0e0" stroke-width="1"/><rect x="0.7" y="7.9" width="3.600" height="3.600" fill="none" stroke="#e0e0e0" stroke-width="1"/><rect x="0.7" y="15.1" width="3.600" height="3.600" fill="none" stroke="#e0e0e0" stroke-width="1"/><rect x="7.9" y="0.7" width="3.600" height="3.600" fill="#e0e0e0" stroke="#e0e0e0" stroke-width="1"/><rect x="7.9" y="7.9" width="3.600" height="3.600" fill="none" stroke="#e0e0e0" stroke-width="1"/><rect x="7.9" y="15.1" width="3.600" height="3.600" fill="none" stroke="#e0e0e0" stroke-width="1"/><rect x="15.1" y="0.7" width="3.600" height="3.600" fill="none" stroke="#e0e0e0" stroke-width="1"/><rect x="15.1" y="7.9" width="3.600" height="3.600" fill="none" stroke="#e0e0e0" stroke-width="1"/><rect x="15.1" y="15.1" width="3.600" height="3.600" fill="none" stroke="#e0e0e0" stroke-width="1"/><path d="M4.300,2.500H7.900M11.500,2.500H15.100M4.300,9.700H7.900M11.500,9.700H15.100M4.300,16.900H7.900M11.500,16.900H15.100M2.500,4.300V7.900M2.500,11.500V15.100M9.700,4.300V7.900M9.700,11.500V15.100M16.900,4.300V7.900M16.900,11.500V15.100" stroke="#e0e0e0" stroke-width="1"/></svg>
<span style="left:147.7px;top:626px;height:14px;line-height:14px;font-size:11px;color:#e4e4e4;">x:</span>
<span style="left:234px;top:626px;height:14px;line-height:14px;font-size:11px;color:#e4e4e4;">B:</span>
<span style="left:148.5px;top:652px;height:14px;line-height:14px;font-size:11px;color:#e4e4e4;">y:</span>
<span style="left:232.5px;top:652px;height:14px;line-height:14px;font-size:11px;color:#e4e4e4;">H:</span>
<div style="left:161.5px;top:623.5px;width:64px;height:17.5px;background:#a9a9a9;border:1px solid #2b2b2b;overflow:hidden;"></div>
<span style="left:166px;top:625.5px;height:14px;line-height:14px;font-size:11px;color:#000;font-weight:normal;letter-spacing:0.17px;">272,611 mn</span>
<div style="left:247.5px;top:623.5px;width:64px;height:17.5px;background:#a9a9a9;border:1px solid #2b2b2b;overflow:hidden;"></div>
<span style="left:252px;top:625.5px;height:14px;line-height:14px;font-size:11px;color:#000;font-weight:normal;letter-spacing:0.09px;">248,528 mn</span>
<div style="left:161.5px;top:649.5px;width:64px;height:17.5px;background:#a9a9a9;border:1px solid #2b2b2b;overflow:hidden;"></div>
<span style="left:166px;top:651.5px;height:14px;line-height:14px;font-size:11px;color:#000;font-weight:normal;letter-spacing:0.09px;">269,353 mn</span>
<div style="left:247.5px;top:649.5px;width:64px;height:17.5px;background:#a9a9a9;border:1px solid #2b2b2b;overflow:hidden;"></div>
<span style="left:252px;top:651.5px;height:14px;line-height:14px;font-size:11px;color:#000;font-weight:normal;letter-spacing:0.11px;">20,814 mm</span>
<svg style="left:321px;top:637px;" width="17" height="16"><rect x="6" y="2" width="5" height="12" rx="2.500" fill="none" stroke="#e0e0e0" stroke-width="1.800"/><path d="M8.500,6V10" stroke="#4a4a4a" stroke-width="3"/><path d="M0.500,8H4M13,8H16.500M1.500,3.500L4.500,5.500M15.500,3.500L12.500,5.500M1.500,12.500L4.500,10.500M15.500,12.500L12.500,10.500" stroke="#e0e0e0" stroke-width="1"/></svg>
<svg style="left:142px;top:679.5px;" width="14" height="10"><path d="M0.500,9.500H12.500M0.500,9.500L9,1" stroke="#e0e0e0" stroke-width="1.100" fill="none"/><path d="M7,9.500A6,6 0 0 0 5.500,5" stroke="#e0e0e0" stroke-width="1" stroke-dasharray="1 1" fill="none"/></svg>
<span style="left:153.5px;top:678px;height:14px;line-height:14px;font-size:11px;color:#e4e4e4;">:</span>
<div style="left:161.5px;top:676px;width:44px;height:17.5px;background:#a9a9a9;border:1px solid #2b2b2b;overflow:hidden;"></div>
<span style="left:166px;top:678px;height:14px;line-height:14px;font-size:11px;color:#000;font-weight:normal;">0°</span>
<div style="left:205.5px;top:676px;width:15px;height:17.5px;background:#5c5c5c;border:1px solid #2b2b2b;background:linear-gradient(#666,#555);"></div>
<svg style="left:209.5px;top:683.25px;" width="7" height="4"><polygon points="0,0 7,0 3.5,4" fill="#e0e0e0"/></svg>
<svg style="left:228px;top:679.5px;" width="12" height="10"><path d="M0.500,9.500L4.500,0.500H11.500L7.500,9.500Z" stroke="#e0e0e0" stroke-width="1.100" fill="none"/></svg>
<span style="left:240px;top:678px;height:14px;line-height:14px;font-size:11px;color:#e4e4e4;">:</span>
<div style="left:247.5px;top:676px;width:44px;height:17.5px;background:#a9a9a9;border:1px solid #2b2b2b;overflow:hidden;"></div>
<span style="left:252px;top:678px;height:14px;line-height:14px;font-size:11px;color:#000;font-weight:normal;">0°</span>
<div style="left:291.5px;top:676px;width:15px;height:17.5px;background:#5c5c5c;border:1px solid #2b2b2b;background:linear-gradient(#666,#555);"></div>
<svg style="left:295.5px;top:683.25px;" width="7" height="4"><polygon points="0,0 7,0 3.5,4" fill="#e0e0e0"/></svg>
<div style="left:114px;top:700.5px;width:230px;height:1px;background:#3a3a3a;"></div>
<div style="left:114px;top:701.5px;width:230px;height:1px;background:#535353;"></div>
<span style="left:167.4px;top:766px;height:14px;line-height:14px;font-size:11px;color:#858585;letter-spacing:-0.54px;">Keine Formeigenschaften</span>
<div style="left:114px;top:844.5px;width:230px;height:1px;background:#3a3a3a;"></div>
<div style="left:114px;top:845.5px;width:230px;height:1px;background:#535353;"></div>
<div style="left:115.2px;top:852.8px;width:11.5px;height:11.5px;background:#5a5a5a;border:1px solid #2b2b2b;"></div>
<span style="left:131.3px;top:851.3px;height:14px;line-height:14px;font-size:11px;color:#e4e4e4;letter-spacing:-0.49px;">Rechteck-Ecken skalieren</span>
<div style="left:115.2px;top:872.8px;width:11.5px;height:11.5px;background:#5a5a5a;border:1px solid #2b2b2b;"></div>
<svg style="left:115.5px;top:870.3px;" width="13" height="12"><path d="M2,6.500L5,10L11,1" stroke="#f4f4f4" stroke-width="1.800" fill="none"/></svg>
<span style="left:131.3px;top:871.3px;height:14px;line-height:14px;font-size:11px;color:#e4e4e4;letter-spacing:-0.44px;">Konturen und Effekte skalieren</span>
<div style="left:115.2px;top:892.8px;width:11.5px;height:11.5px;background:#505050;border:1px solid #3c3c3c;"></div>
<span style="left:131.3px;top:891.3px;height:14px;line-height:14px;font-size:11px;color:#808080;letter-spacing:-0.47px;">An Pixelraster ausrichten</span>
<div style="left:0px;top:981.5px;width:1920px;height:1px;background:#2b2b2b;"></div>
<div style="left:0px;top:982.5px;width:1920px;height:2.5px;background:#777;background:linear-gradient(90deg,#8c8c8c,#6e6e6e 25%,#626262);"></div>
<div style="left:1373px;top:967px;width:16px;height:14.5px;background:#4a4a4a;"></div>
</div></body></html>
